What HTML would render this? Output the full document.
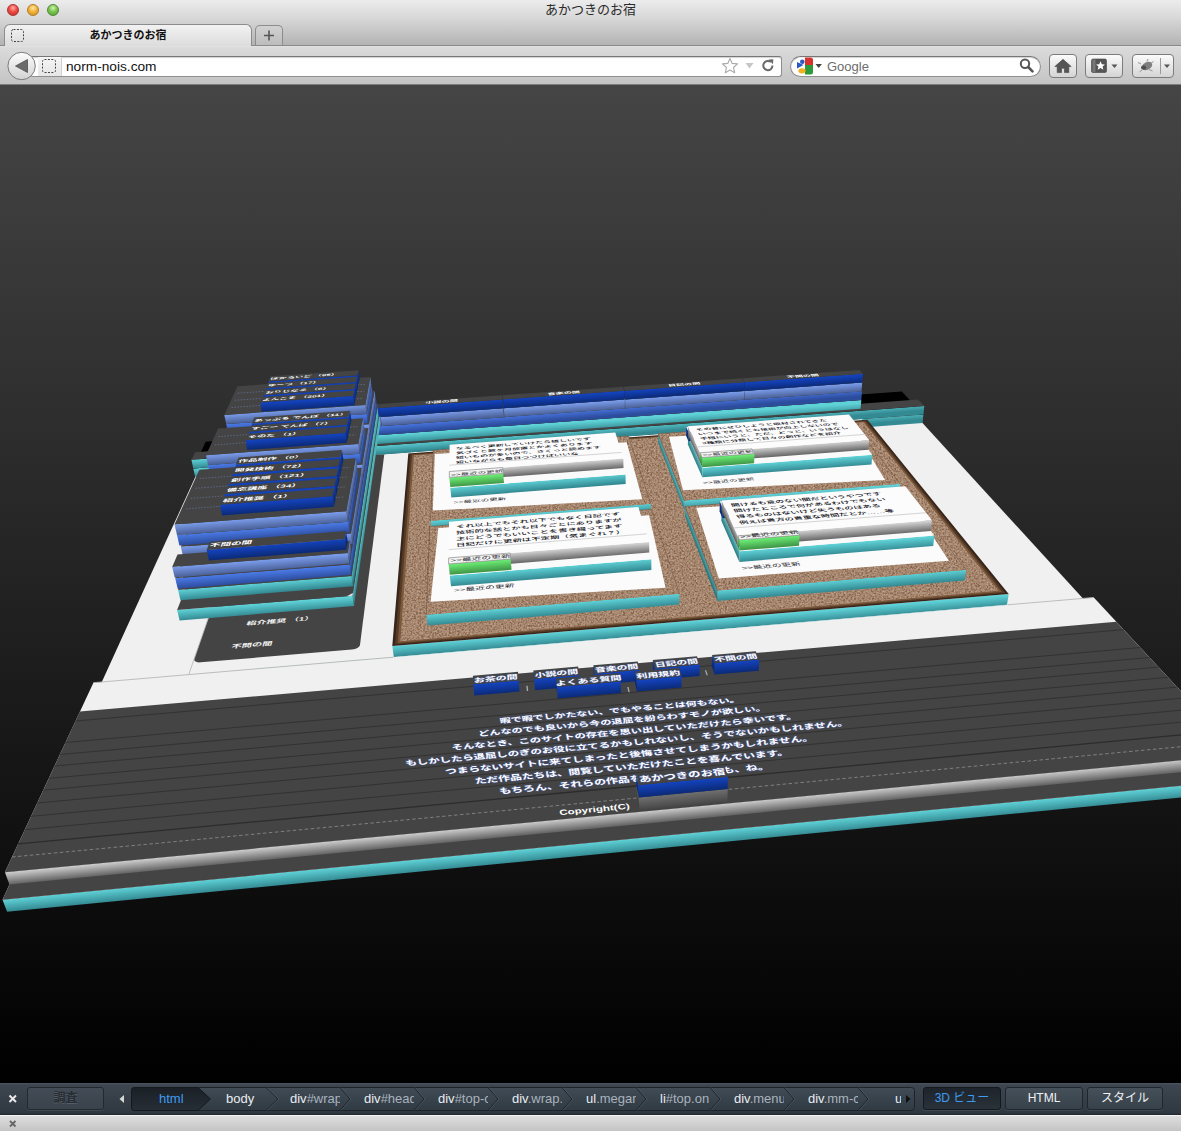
<!DOCTYPE html>
<html lang="ja">
<head>
<meta charset="utf-8">
<title>あかつきのお宿</title>
<style>
html,body{margin:0;padding:0;}
body{width:1181px;height:1131px;overflow:hidden;position:relative;background:#000;font-family:"Liberation Sans","Noto Sans CJK JP",sans-serif;}
#chrome{position:absolute;left:0;top:0;width:1181px;height:85px;background:linear-gradient(#ececec 0px,#d8d8d8 18px,#b3b3b3 45px,#b3b3b3 100%);}
#titlebar{position:absolute;left:0;top:0;width:1181px;height:22px;text-align:center;font-size:13px;line-height:20px;color:#2a2a2a;}
.tl{position:absolute;top:4px;width:12px;height:12px;border-radius:50%;box-sizing:border-box;}
#tabbar{position:absolute;left:0;top:22px;width:1181px;height:23px;border-bottom:1px solid #8a8a8a;}
#tab{position:absolute;left:4px;top:24px;width:248px;height:22px;background:linear-gradient(#f2f2f2,#dcdcdc);border:1px solid #8c8c8c;border-bottom:none;border-radius:6px 6px 0 0;box-sizing:border-box;font-size:11px;font-weight:bold;text-align:center;line-height:20px;color:#111;}
#newtab{position:absolute;left:255px;top:25px;width:28px;height:20px;background:linear-gradient(#d2d2d2,#bcbcbc);border:1px solid #8c8c8c;border-bottom:none;border-radius:5px 5px 0 0;box-sizing:border-box;}
#navbar{position:absolute;left:0;top:46px;width:1181px;height:38px;background:linear-gradient(#e2e2e2 0,#dadada 2px,#c4c4c4 100%);border-bottom:1px solid #7d7d7d;}
.field{position:absolute;top:56px;height:21px;background:#fff;border:1px solid #8f8f8f;border-top-color:#777;box-sizing:border-box;box-shadow:inset 0 1px 1px rgba(0,0,0,.18);}
.tbtn{position:absolute;top:54px;height:24px;border:1px solid #7c7c7c;border-radius:4px;box-sizing:border-box;background:linear-gradient(#fbfbfb,#d4d4d4);}
#view{position:absolute;left:0;top:85px;width:1181px;height:998px;background:linear-gradient(#454545 0%,#000 100%);overflow:hidden;}
#scene{position:absolute;left:0;top:-85px;}
#dev{position:absolute;left:0;top:1083px;width:1181px;height:32px;background:linear-gradient(#4c5560 0px,#3d4650 2px,#2f3841 30px,#1d232a 32px);color:#e4e8ec;font-size:12px;}
#status{position:absolute;left:0;top:1115px;width:1181px;height:16px;background:linear-gradient(#dedede,#c4c4c4);border-top:1px solid #f4f4f4;box-sizing:border-box;}
.crumb{position:absolute;top:0;height:32px;line-height:31px;font-size:13px;color:#e9edf0;white-space:nowrap;}
.crumb i{font-style:normal;color:#a9b3bd;}
.dbtn{position:absolute;top:4px;height:23px;box-sizing:border-box;border:1px solid #20262d;border-radius:3px;background:linear-gradient(#46505a,#37414a);text-align:center;line-height:21px;font-size:12px;color:#eef1f4;box-shadow:0 1px 0 rgba(255,255,255,.08);}
</style>
</head>
<body>
<div id="chrome">
 <div id="titlebar">あかつきのお宿</div>
 <div class="tl" style="left:7px;background:radial-gradient(circle at 50% 30%,#ffb0a8 0%,#ee4b43 45%,#c2281f 100%);border:1px solid #a8352e;"></div>
 <div class="tl" style="left:27px;background:radial-gradient(circle at 50% 30%,#ffe6a8 0%,#f2b43a 45%,#d08a14 100%);border:1px solid #b07a24;"></div>
 <div class="tl" style="left:47px;background:radial-gradient(circle at 50% 30%,#d4f2b0 0%,#7cc552 45%,#4e9a2c 100%);border:1px solid #4f8a38;"></div>
 <div id="tabbar"></div>
 <div id="navbar"></div>
 <div id="tab">あかつきのお宿</div>
 <svg style="position:absolute;left:10px;top:28px" width="16" height="16"><rect x="1.5" y="1.5" width="12" height="12" rx="2" fill="none" stroke="#444" stroke-width="1" stroke-dasharray="2 1.4"/></svg>
 <div id="newtab"><svg width="26" height="19" style="position:absolute;left:0;top:0"><path d="M13 4.5v10M8 9.5h10" stroke="#555" stroke-width="1.6" fill="none"/></svg></div>
 <div class="field" style="left:30px;width:752px;border-radius:3px;"></div>
 <div style="position:absolute;left:38px;top:57px;width:23px;height:19px;background:linear-gradient(#f6f6f6,#e6e6e6);border-right:1px solid #d0d0d0;"></div>
 <svg style="position:absolute;left:6px;top:50px" width="32" height="32"><circle cx="15.6" cy="16" r="13.7" fill="url(#bg1)" stroke="#7a7a7a" stroke-width="1"/><defs><linearGradient id="bg1" x1="0" y1="0" x2="0" y2="1"><stop offset="0" stop-color="#fdfdfd"/><stop offset="1" stop-color="#d2d2d2"/></linearGradient></defs><path d="M21.5 9.5v13L9.5 16z" fill="#6a6a6a" stroke="#505050" stroke-width=".8" stroke-linejoin="round"/></svg>
 <svg style="position:absolute;left:41px;top:58px" width="16" height="16"><rect x="1.5" y="1.5" width="13" height="13" rx="2" fill="none" stroke="#444" stroke-width="1" stroke-dasharray="2 1.4"/></svg>
 <div style="position:absolute;left:66px;top:57px;font-size:13.7px;line-height:19px;color:#111;">norm-nois.com</div>
 <svg style="position:absolute;left:720px;top:56px" width="60" height="20"><path d="M10 2.5l2.2 4.9 5.3.5-4 3.6 1.2 5.2L10 14l-4.7 2.7 1.2-5.2-4-3.6 5.3-.5z" fill="#fff" stroke="#aaa" stroke-width="1.1" stroke-linejoin="round"/><path d="M25.5 7h8l-4 5.5z" fill="#c6c6c6"/><path d="M52.5 9.5a4.6 4.6 0 1 1-1.6-3.4" fill="none" stroke="#6a6a6a" stroke-width="2"/><path d="M48.5 3.5l4.8-.3-.3 5z" fill="#6a6a6a"/></svg>
 <div class="field" style="left:790px;width:251px;border-radius:11px;"></div>
 <svg style="position:absolute;left:796px;top:57px" width="30" height="18"><rect x="1" y="0.5" width="16" height="17" rx="2.5" fill="#fff"/><path d="M9 .5h5.5a2.5 2.5 0 0 1 2.500 2.500V8H9z" fill="#d6312b"/><path d="M9 8h8v7a2.500 2.500 0 0 1-2.500 2.500H9z" fill="#2a9a3c"/><path d="M1 5l6.500 3L1 11.500z" fill="#2b59c3"/><circle cx="6.300" cy="4.800" r="2.300" fill="#2b59c3"/><ellipse cx="6" cy="13.800" rx="3.600" ry="2.600" fill="#f2b01e"/><path d="M19.500 7h6.400l-3.200 4z" fill="#444"/></svg>
 <div style="position:absolute;left:827px;top:57px;font-size:13px;line-height:19px;color:#6d6d6d;">Google</div>
 <svg style="position:absolute;left:1017px;top:56px" width="20" height="20"><circle cx="8" cy="7.800" r="4.200" fill="none" stroke="#555" stroke-width="2"/><path d="M11.200 11l4.300 4.300" stroke="#555" stroke-width="2.600" stroke-linecap="round"/></svg>
 <div class="tbtn" style="left:1049px;width:28px;"><svg width="26" height="22" style="position:absolute;left:0;top:0"><path d="M13 4.300L4.800 11.600h2.400v6h4.300v-4.300h3v4.300h4.300v-6h2.400z" fill="#555" stroke="#444" stroke-width=".6" stroke-linejoin="round"/></svg></div>
 <div class="tbtn" style="left:1085px;width:38px;"><svg width="36" height="22" style="position:absolute;left:0;top:0"><rect x="5.500" y="4" width="15" height="13.500" rx="1.500" fill="#555" stroke="#444" stroke-width=".6"/><rect x="6.500" y="4.500" width="3" height="12.500" fill="#777"/><path d="M14.500 6.300l1.300 2.900 3.100.3-2.300 2.100.7 3.100-2.800-1.600-2.800 1.600.7-3.100-2.300-2.100 3.100-.3z" fill="#fff"/><path d="M25.500 9.500h6l-3 3.600z" fill="#555"/></svg></div>
 <div class="tbtn" style="left:1132px;width:42px;"><svg width="40" height="22" style="position:absolute;left:0;top:0"><ellipse cx="14" cy="11" rx="5.500" ry="3.800" transform="rotate(-28 14 11)" fill="#7d7d7d"/><ellipse cx="10.600" cy="12.600" rx="2.600" ry="2.200" fill="#4d4d4d"/><path d="M8 9l-3-1.500M9 15l-2.500 2M16 14.500l3.500 1.500M17.500 8.500l3-2M14 6.500l1-2.500" stroke="#8a8a8a" stroke-width=".9" fill="none"/><path d="M27.500 3v16" stroke="#999" stroke-width="1"/><path d="M31 9.500h6l-3 3.600z" fill="#555"/></svg></div>
</div>
<div id="view">
<svg id="scene" width="1181" height="1083" viewBox="0 0 1181 1083" font-family="Liberation Sans,Noto Sans CJK JP,sans-serif"><defs><filter id="corkf" x="0" y="0" width="100%" height="100%"><feTurbulence type="fractalNoise" baseFrequency="0.55" numOctaves="2" seed="7" result="n"/><feColorMatrix in="n" type="matrix" values="0 0 0 0 0.62  0 0 0 0 0.48  0 0 0 0 0.38  1.6 1.6 0 0 -1.15" result="c"/><feComposite in="c" in2="SourceGraphic" operator="in" result="cc"/><feMerge><feMergeNode in="SourceGraphic"/><feMergeNode in="cc"/></feMerge></filter><filter id="corkg" x="0" y="0" width="100%" height="100%"><feTurbulence type="fractalNoise" baseFrequency="0.7" numOctaves="2" seed="3" result="n"/><feColorMatrix in="n" type="matrix" values="0 0 0 0 0.85  0 0 0 0 0.74  0 0 0 0 0.64  0 2.2 0 0 -1.15" result="c"/><feComposite in="c" in2="SourceGraphic" operator="in"/></filter><linearGradient id="g1" gradientUnits="userSpaceOnUse" x1="2.5" y1="899.7" x2="3.7" y2="912.1"><stop offset="0" stop-color="#5fd2d7"/><stop offset="1" stop-color="#348a93"/></linearGradient><linearGradient id="g2" gradientUnits="userSpaceOnUse" x1="193.3" y1="468.4" x2="194.0" y2="477.2"><stop offset="0" stop-color="#5fd2d7"/><stop offset="1" stop-color="#348a93"/></linearGradient><linearGradient id="g3" gradientUnits="userSpaceOnUse" x1="188.8" y1="674.4" x2="189.8" y2="685.4"><stop offset="0" stop-color="#5fd2d7"/><stop offset="1" stop-color="#348a93"/></linearGradient><linearGradient id="g4" gradientUnits="userSpaceOnUse" x1="191.4" y1="459.7" x2="192.1" y2="468.5"><stop offset="0" stop-color="#5fd2d7"/><stop offset="1" stop-color="#348a93"/></linearGradient><linearGradient id="g5" gradientUnits="userSpaceOnUse" x1="259.5" y1="443.7" x2="260.1" y2="452.6"><stop offset="0" stop-color="#5fd2d7"/><stop offset="1" stop-color="#348a93"/></linearGradient><linearGradient id="g6" gradientUnits="userSpaceOnUse" x1="257.8" y1="434.9" x2="258.5" y2="443.8"><stop offset="0" stop-color="#4b7ae6"/><stop offset="1" stop-color="#2c4c9c"/></linearGradient><linearGradient id="g7" gradientUnits="userSpaceOnUse" x1="744.7" y1="391.0" x2="745.3" y2="399.7"><stop offset="0" stop-color="#7a9ceb"/><stop offset="1" stop-color="#4a6096"/></linearGradient><linearGradient id="g8" gradientUnits="userSpaceOnUse" x1="742.3" y1="387.0" x2="738.2" y2="389.5"><stop offset="0" stop-color="#6886ca"/><stop offset="1" stop-color="#3f5281"/></linearGradient><linearGradient id="g9" gradientUnits="userSpaceOnUse" x1="625.1" y1="399.6" x2="625.7" y2="408.4"><stop offset="0" stop-color="#7a9ceb"/><stop offset="1" stop-color="#4a6096"/></linearGradient><linearGradient id="g10" gradientUnits="userSpaceOnUse" x1="623.6" y1="395.5" x2="621.1" y2="396.4"><stop offset="0" stop-color="#6886ca"/><stop offset="1" stop-color="#3f5281"/></linearGradient><linearGradient id="g11" gradientUnits="userSpaceOnUse" x1="256.2" y1="426.0" x2="256.8" y2="435.0"><stop offset="0" stop-color="#7a9ceb"/><stop offset="1" stop-color="#4a6096"/></linearGradient><linearGradient id="g12" gradientUnits="userSpaceOnUse" x1="380.3" y1="417.1" x2="382.7" y2="417.5"><stop offset="0" stop-color="#6886ca"/><stop offset="1" stop-color="#3f5281"/></linearGradient><linearGradient id="g13" gradientUnits="userSpaceOnUse" x1="503.8" y1="408.3" x2="504.4" y2="417.1"><stop offset="0" stop-color="#7a9ceb"/><stop offset="1" stop-color="#4a6096"/></linearGradient><linearGradient id="g14" gradientUnits="userSpaceOnUse" x1="503.4" y1="404.1" x2="503.2" y2="404.1"><stop offset="0" stop-color="#6886ca"/><stop offset="1" stop-color="#3f5281"/></linearGradient><linearGradient id="g15" gradientUnits="userSpaceOnUse" x1="380.8" y1="417.1" x2="381.5" y2="426.0"><stop offset="0" stop-color="#7a9ceb"/><stop offset="1" stop-color="#4a6096"/></linearGradient><linearGradient id="g16" gradientUnits="userSpaceOnUse" x1="744.9" y1="382.2" x2="745.5" y2="391.0"><stop offset="0" stop-color="#1444c0"/><stop offset="1" stop-color="#0b2a78"/></linearGradient><linearGradient id="g17" gradientUnits="userSpaceOnUse" x1="742.5" y1="378.2" x2="738.4" y2="380.8"><stop offset="0" stop-color="#113aa5"/><stop offset="1" stop-color="#092467"/></linearGradient><linearGradient id="g18" gradientUnits="userSpaceOnUse" x1="624.8" y1="390.7" x2="625.5" y2="399.6"><stop offset="0" stop-color="#1444c0"/><stop offset="1" stop-color="#0b2a78"/></linearGradient><linearGradient id="g19" gradientUnits="userSpaceOnUse" x1="623.4" y1="386.7" x2="620.8" y2="387.6"><stop offset="0" stop-color="#113aa5"/><stop offset="1" stop-color="#092467"/></linearGradient><linearGradient id="g20" gradientUnits="userSpaceOnUse" x1="254.5" y1="417.0" x2="255.1" y2="426.1"><stop offset="0" stop-color="#1444c0"/><stop offset="1" stop-color="#0b2a78"/></linearGradient><linearGradient id="g21" gradientUnits="userSpaceOnUse" x1="379.1" y1="408.2" x2="381.6" y2="408.5"><stop offset="0" stop-color="#113aa5"/><stop offset="1" stop-color="#092467"/></linearGradient><linearGradient id="g22" gradientUnits="userSpaceOnUse" x1="503.1" y1="399.3" x2="503.7" y2="408.3"><stop offset="0" stop-color="#1444c0"/><stop offset="1" stop-color="#0b2a78"/></linearGradient><linearGradient id="g23" gradientUnits="userSpaceOnUse" x1="502.7" y1="395.2" x2="502.5" y2="395.3"><stop offset="0" stop-color="#113aa5"/><stop offset="1" stop-color="#092467"/></linearGradient><linearGradient id="g24" gradientUnits="userSpaceOnUse" x1="379.7" y1="408.1" x2="380.3" y2="417.1"><stop offset="0" stop-color="#1444c0"/><stop offset="1" stop-color="#0b2a78"/></linearGradient><linearGradient id="g25" gradientUnits="userSpaceOnUse" x1="392.3" y1="646.1" x2="393.2" y2="657.0"><stop offset="0" stop-color="#5fd2d7"/><stop offset="1" stop-color="#348a93"/></linearGradient><linearGradient id="g26" gradientUnits="userSpaceOnUse" x1="684.3" y1="500.4" x2="685.0" y2="510.1"><stop offset="0" stop-color="#5fd2d7"/><stop offset="1" stop-color="#348a93"/></linearGradient><linearGradient id="g27" gradientUnits="userSpaceOnUse" x1="658.2" y1="433.8" x2="655.3" y2="434.9"><stop offset="0" stop-color="#51b4b8"/><stop offset="1" stop-color="#2c767e"/></linearGradient><linearGradient id="g28" gradientUnits="userSpaceOnUse" x1="430.6" y1="520.8" x2="431.4" y2="530.6"><stop offset="0" stop-color="#5fd2d7"/><stop offset="1" stop-color="#348a93"/></linearGradient><linearGradient id="g29" gradientUnits="userSpaceOnUse" x1="717.5" y1="590.4" x2="718.4" y2="601.0"><stop offset="0" stop-color="#5fd2d7"/><stop offset="1" stop-color="#348a93"/></linearGradient><linearGradient id="g30" gradientUnits="userSpaceOnUse" x1="685.0" y1="506.6" x2="681.7" y2="507.9"><stop offset="0" stop-color="#51b4b8"/><stop offset="1" stop-color="#2c767e"/></linearGradient><linearGradient id="g31" gradientUnits="userSpaceOnUse" x1="426.3" y1="614.8" x2="427.2" y2="625.7"><stop offset="0" stop-color="#5fd2d7"/><stop offset="1" stop-color="#348a93"/></linearGradient><linearGradient id="g32" gradientUnits="userSpaceOnUse" x1="702.4" y1="467.7" x2="703.1" y2="477.2"><stop offset="0" stop-color="#5fd2d7"/><stop offset="1" stop-color="#348a93"/></linearGradient><linearGradient id="g33" gradientUnits="userSpaceOnUse" x1="688.0" y1="435.5" x2="684.5" y2="437.0"><stop offset="0" stop-color="#51b4b8"/><stop offset="1" stop-color="#2c767e"/></linearGradient><linearGradient id="g34" gradientUnits="userSpaceOnUse" x1="450.3" y1="487.7" x2="451.1" y2="497.4"><stop offset="0" stop-color="#5fd2d7"/><stop offset="1" stop-color="#348a93"/></linearGradient><linearGradient id="g35" gradientUnits="userSpaceOnUse" x1="739.7" y1="551.3" x2="740.5" y2="561.8"><stop offset="0" stop-color="#5fd2d7"/><stop offset="1" stop-color="#348a93"/></linearGradient><linearGradient id="g36" gradientUnits="userSpaceOnUse" x1="721.5" y1="510.7" x2="717.6" y2="512.4"><stop offset="0" stop-color="#51b4b8"/><stop offset="1" stop-color="#2c767e"/></linearGradient><linearGradient id="g37" gradientUnits="userSpaceOnUse" x1="449.8" y1="575.5" x2="450.7" y2="586.2"><stop offset="0" stop-color="#5fd2d7"/><stop offset="1" stop-color="#348a93"/></linearGradient><linearGradient id="g38" gradientUnits="userSpaceOnUse" x1="688.5" y1="431.9" x2="689.2" y2="441.2"><stop offset="0" stop-color="#1444c0"/><stop offset="1" stop-color="#0b2a78"/></linearGradient><linearGradient id="g39" gradientUnits="userSpaceOnUse" x1="686.3" y1="426.9" x2="682.8" y2="428.5"><stop offset="0" stop-color="#113aa5"/><stop offset="1" stop-color="#092467"/></linearGradient><linearGradient id="g40" gradientUnits="userSpaceOnUse" x1="722.7" y1="507.9" x2="723.5" y2="518.1"><stop offset="0" stop-color="#1444c0"/><stop offset="1" stop-color="#0b2a78"/></linearGradient><linearGradient id="g41" gradientUnits="userSpaceOnUse" x1="719.8" y1="501.3" x2="715.8" y2="503.1"><stop offset="0" stop-color="#113aa5"/><stop offset="1" stop-color="#092467"/></linearGradient><linearGradient id="g42" gradientUnits="userSpaceOnUse" x1="449.4" y1="471.5" x2="450.1" y2="481.1"><stop offset="0" stop-color="#cfcfcf"/><stop offset="1" stop-color="#636363"/></linearGradient><linearGradient id="g43" gradientUnits="userSpaceOnUse" x1="700.1" y1="452.8" x2="700.8" y2="462.3"><stop offset="0" stop-color="#cfcfcf"/><stop offset="1" stop-color="#636363"/></linearGradient><linearGradient id="g44" gradientUnits="userSpaceOnUse" x1="688.0" y1="426.3" x2="684.5" y2="427.8"><stop offset="0" stop-color="#b2b2b2"/><stop offset="1" stop-color="#555555"/></linearGradient><linearGradient id="g45" gradientUnits="userSpaceOnUse" x1="702.2" y1="457.5" x2="702.9" y2="467.1"><stop offset="0" stop-color="#6ef277"/><stop offset="1" stop-color="#3f9446"/></linearGradient><linearGradient id="g46" gradientUnits="userSpaceOnUse" x1="700.1" y1="452.8" x2="696.4" y2="454.5"><stop offset="0" stop-color="#5ed066"/><stop offset="1" stop-color="#367f3c"/></linearGradient><linearGradient id="g47" gradientUnits="userSpaceOnUse" x1="449.3" y1="477.4" x2="450.0" y2="487.2"><stop offset="0" stop-color="#6ef277"/><stop offset="1" stop-color="#3f9446"/></linearGradient><linearGradient id="g48" gradientUnits="userSpaceOnUse" x1="448.7" y1="557.9" x2="449.5" y2="568.6"><stop offset="0" stop-color="#cfcfcf"/><stop offset="1" stop-color="#636363"/></linearGradient><linearGradient id="g49" gradientUnits="userSpaceOnUse" x1="737.8" y1="535.9" x2="738.6" y2="546.4"><stop offset="0" stop-color="#cfcfcf"/><stop offset="1" stop-color="#636363"/></linearGradient><linearGradient id="g50" gradientUnits="userSpaceOnUse" x1="721.7" y1="500.5" x2="717.7" y2="502.3"><stop offset="0" stop-color="#b2b2b2"/><stop offset="1" stop-color="#555555"/></linearGradient><linearGradient id="g51" gradientUnits="userSpaceOnUse" x1="739.6" y1="539.9" x2="740.5" y2="550.5"><stop offset="0" stop-color="#6ef277"/><stop offset="1" stop-color="#3f9446"/></linearGradient><linearGradient id="g52" gradientUnits="userSpaceOnUse" x1="737.8" y1="535.9" x2="733.5" y2="537.8"><stop offset="0" stop-color="#5ed066"/><stop offset="1" stop-color="#367f3c"/></linearGradient><linearGradient id="g53" gradientUnits="userSpaceOnUse" x1="448.6" y1="564.0" x2="449.5" y2="574.8"><stop offset="0" stop-color="#6ef277"/><stop offset="1" stop-color="#3f9446"/></linearGradient><linearGradient id="g54" gradientUnits="userSpaceOnUse" x1="177.1" y1="610.0" x2="177.9" y2="620.6"><stop offset="0" stop-color="#5fd2d7"/><stop offset="1" stop-color="#348a93"/></linearGradient><linearGradient id="g55" gradientUnits="userSpaceOnUse" x1="352.5" y1="595.7" x2="355.6" y2="596.2"><stop offset="0" stop-color="#51b4b8"/><stop offset="1" stop-color="#2c767e"/></linearGradient><linearGradient id="g56" gradientUnits="userSpaceOnUse" x1="178.0" y1="589.9" x2="178.9" y2="600.4"><stop offset="0" stop-color="#5fd2d7"/><stop offset="1" stop-color="#348a93"/></linearGradient><linearGradient id="g57" gradientUnits="userSpaceOnUse" x1="351.5" y1="575.9" x2="354.6" y2="576.4"><stop offset="0" stop-color="#51b4b8"/><stop offset="1" stop-color="#2c767e"/></linearGradient><linearGradient id="g58" gradientUnits="userSpaceOnUse" x1="175.2" y1="578.3" x2="176.0" y2="588.9"><stop offset="0" stop-color="#4b7ae6"/><stop offset="1" stop-color="#2c4c9c"/></linearGradient><linearGradient id="g59" gradientUnits="userSpaceOnUse" x1="349.6" y1="564.4" x2="352.8" y2="564.9"><stop offset="0" stop-color="#4068c5"/><stop offset="1" stop-color="#254186"/></linearGradient><linearGradient id="g60" gradientUnits="userSpaceOnUse" x1="229.0" y1="434.4" x2="229.6" y2="443.5"><stop offset="0" stop-color="#7a9ceb"/><stop offset="1" stop-color="#4a6096"/></linearGradient><linearGradient id="g61" gradientUnits="userSpaceOnUse" x1="368.9" y1="424.3" x2="371.6" y2="424.8"><stop offset="0" stop-color="#6886ca"/><stop offset="1" stop-color="#3f5281"/></linearGradient><linearGradient id="g62" gradientUnits="userSpaceOnUse" x1="211.2" y1="475.8" x2="211.9" y2="485.5"><stop offset="0" stop-color="#7a9ceb"/><stop offset="1" stop-color="#4a6096"/></linearGradient><linearGradient id="g63" gradientUnits="userSpaceOnUse" x1="362.3" y1="464.6" x2="365.1" y2="465.1"><stop offset="0" stop-color="#6886ca"/><stop offset="1" stop-color="#3f5281"/></linearGradient><linearGradient id="g64" gradientUnits="userSpaceOnUse" x1="180.8" y1="546.7" x2="181.6" y2="557.2"><stop offset="0" stop-color="#7a9ceb"/><stop offset="1" stop-color="#4a6096"/></linearGradient><linearGradient id="g65" gradientUnits="userSpaceOnUse" x1="350.9" y1="533.5" x2="354.1" y2="534.0"><stop offset="0" stop-color="#6886ca"/><stop offset="1" stop-color="#3f5281"/></linearGradient><linearGradient id="g66" gradientUnits="userSpaceOnUse" x1="172.2" y1="566.9" x2="173.0" y2="577.7"><stop offset="0" stop-color="#7a9ceb"/><stop offset="1" stop-color="#4a6096"/></linearGradient><linearGradient id="g67" gradientUnits="userSpaceOnUse" x1="347.7" y1="553.1" x2="351.0" y2="553.6"><stop offset="0" stop-color="#6886ca"/><stop offset="1" stop-color="#3f5281"/></linearGradient><linearGradient id="g68" gradientUnits="userSpaceOnUse" x1="226.2" y1="424.0" x2="226.8" y2="433.1"><stop offset="0" stop-color="#4b7ae6"/><stop offset="1" stop-color="#2c4c9c"/></linearGradient><linearGradient id="g69" gradientUnits="userSpaceOnUse" x1="366.6" y1="414.0" x2="369.3" y2="414.5"><stop offset="0" stop-color="#4068c5"/><stop offset="1" stop-color="#254186"/></linearGradient><linearGradient id="g70" gradientUnits="userSpaceOnUse" x1="208.0" y1="464.9" x2="208.7" y2="474.6"><stop offset="0" stop-color="#4b7ae6"/><stop offset="1" stop-color="#2c4c9c"/></linearGradient><linearGradient id="g71" gradientUnits="userSpaceOnUse" x1="359.7" y1="453.8" x2="362.7" y2="454.3"><stop offset="0" stop-color="#4068c5"/><stop offset="1" stop-color="#254186"/></linearGradient><linearGradient id="g72" gradientUnits="userSpaceOnUse" x1="177.0" y1="535.0" x2="177.8" y2="545.6"><stop offset="0" stop-color="#4b7ae6"/><stop offset="1" stop-color="#2c4c9c"/></linearGradient><linearGradient id="g73" gradientUnits="userSpaceOnUse" x1="348.0" y1="521.8" x2="351.3" y2="522.3"><stop offset="0" stop-color="#4068c5"/><stop offset="1" stop-color="#254186"/></linearGradient><linearGradient id="g74" gradientUnits="userSpaceOnUse" x1="206.6" y1="549.9" x2="207.5" y2="560.6"><stop offset="0" stop-color="#1444c0"/><stop offset="1" stop-color="#0b2a78"/></linearGradient><linearGradient id="g75" gradientUnits="userSpaceOnUse" x1="344.7" y1="539.0" x2="348.1" y2="539.6"><stop offset="0" stop-color="#113aa5"/><stop offset="1" stop-color="#092467"/></linearGradient><linearGradient id="g76" gradientUnits="userSpaceOnUse" x1="224.3" y1="414.9" x2="225.0" y2="424.1"><stop offset="0" stop-color="#7a9ceb"/><stop offset="1" stop-color="#4a6096"/></linearGradient><linearGradient id="g77" gradientUnits="userSpaceOnUse" x1="365.3" y1="404.9" x2="368.1" y2="405.4"><stop offset="0" stop-color="#6886ca"/><stop offset="1" stop-color="#3f5281"/></linearGradient><linearGradient id="g78" gradientUnits="userSpaceOnUse" x1="206.0" y1="455.3" x2="206.7" y2="465.0"><stop offset="0" stop-color="#7a9ceb"/><stop offset="1" stop-color="#4a6096"/></linearGradient><linearGradient id="g79" gradientUnits="userSpaceOnUse" x1="358.3" y1="444.1" x2="361.4" y2="444.7"><stop offset="0" stop-color="#6886ca"/><stop offset="1" stop-color="#3f5281"/></linearGradient><linearGradient id="g80" gradientUnits="userSpaceOnUse" x1="174.5" y1="524.4" x2="175.3" y2="535.1"><stop offset="0" stop-color="#7a9ceb"/><stop offset="1" stop-color="#4a6096"/></linearGradient><linearGradient id="g81" gradientUnits="userSpaceOnUse" x1="346.3" y1="511.2" x2="349.7" y2="511.8"><stop offset="0" stop-color="#6886ca"/><stop offset="1" stop-color="#3f5281"/></linearGradient><linearGradient id="g82" gradientUnits="userSpaceOnUse" x1="268.4" y1="381.4" x2="269.1" y2="390.3"><stop offset="0" stop-color="#1444c0"/><stop offset="1" stop-color="#0b2a78"/></linearGradient><linearGradient id="g83" gradientUnits="userSpaceOnUse" x1="357.4" y1="375.2" x2="360.3" y2="375.8"><stop offset="0" stop-color="#113aa5"/><stop offset="1" stop-color="#092467"/></linearGradient><linearGradient id="g84" gradientUnits="userSpaceOnUse" x1="265.7" y1="388.2" x2="266.4" y2="397.3"><stop offset="0" stop-color="#1444c0"/><stop offset="1" stop-color="#0b2a78"/></linearGradient><linearGradient id="g85" gradientUnits="userSpaceOnUse" x1="356.0" y1="382.0" x2="359.0" y2="382.6"><stop offset="0" stop-color="#113aa5"/><stop offset="1" stop-color="#092467"/></linearGradient><linearGradient id="g86" gradientUnits="userSpaceOnUse" x1="263.0" y1="395.3" x2="263.6" y2="404.5"><stop offset="0" stop-color="#1444c0"/><stop offset="1" stop-color="#0b2a78"/></linearGradient><linearGradient id="g87" gradientUnits="userSpaceOnUse" x1="354.5" y1="388.9" x2="357.6" y2="389.5"><stop offset="0" stop-color="#113aa5"/><stop offset="1" stop-color="#092467"/></linearGradient><linearGradient id="g88" gradientUnits="userSpaceOnUse" x1="260.1" y1="402.6" x2="260.7" y2="411.9"><stop offset="0" stop-color="#1444c0"/><stop offset="1" stop-color="#0b2a78"/></linearGradient><linearGradient id="g89" gradientUnits="userSpaceOnUse" x1="353.1" y1="396.1" x2="356.1" y2="396.7"><stop offset="0" stop-color="#113aa5"/><stop offset="1" stop-color="#092467"/></linearGradient><linearGradient id="g90" gradientUnits="userSpaceOnUse" x1="251.8" y1="423.6" x2="252.5" y2="433.2"><stop offset="0" stop-color="#1444c0"/><stop offset="1" stop-color="#0b2a78"/></linearGradient><linearGradient id="g91" gradientUnits="userSpaceOnUse" x1="348.8" y1="416.7" x2="352.0" y2="417.4"><stop offset="0" stop-color="#113aa5"/><stop offset="1" stop-color="#092467"/></linearGradient><linearGradient id="g92" gradientUnits="userSpaceOnUse" x1="248.6" y1="431.8" x2="249.3" y2="441.5"><stop offset="0" stop-color="#1444c0"/><stop offset="1" stop-color="#0b2a78"/></linearGradient><linearGradient id="g93" gradientUnits="userSpaceOnUse" x1="347.1" y1="424.7" x2="350.4" y2="425.4"><stop offset="0" stop-color="#113aa5"/><stop offset="1" stop-color="#092467"/></linearGradient><linearGradient id="g94" gradientUnits="userSpaceOnUse" x1="245.3" y1="440.2" x2="246.0" y2="450.0"><stop offset="0" stop-color="#1444c0"/><stop offset="1" stop-color="#0b2a78"/></linearGradient><linearGradient id="g95" gradientUnits="userSpaceOnUse" x1="345.4" y1="433.0" x2="348.7" y2="433.7"><stop offset="0" stop-color="#113aa5"/><stop offset="1" stop-color="#092467"/></linearGradient><linearGradient id="g96" gradientUnits="userSpaceOnUse" x1="235.7" y1="464.6" x2="236.5" y2="474.7"><stop offset="0" stop-color="#1444c0"/><stop offset="1" stop-color="#0b2a78"/></linearGradient><linearGradient id="g97" gradientUnits="userSpaceOnUse" x1="340.5" y1="456.9" x2="343.9" y2="457.6"><stop offset="0" stop-color="#113aa5"/><stop offset="1" stop-color="#092467"/></linearGradient><linearGradient id="g98" gradientUnits="userSpaceOnUse" x1="232.0" y1="474.1" x2="232.7" y2="484.4"><stop offset="0" stop-color="#1444c0"/><stop offset="1" stop-color="#0b2a78"/></linearGradient><linearGradient id="g99" gradientUnits="userSpaceOnUse" x1="338.5" y1="466.2" x2="342.0" y2="466.9"><stop offset="0" stop-color="#113aa5"/><stop offset="1" stop-color="#092467"/></linearGradient><linearGradient id="g100" gradientUnits="userSpaceOnUse" x1="228.1" y1="484.0" x2="228.9" y2="494.4"><stop offset="0" stop-color="#1444c0"/><stop offset="1" stop-color="#0b2a78"/></linearGradient><linearGradient id="g101" gradientUnits="userSpaceOnUse" x1="336.5" y1="475.9" x2="340.1" y2="476.6"><stop offset="0" stop-color="#113aa5"/><stop offset="1" stop-color="#092467"/></linearGradient><linearGradient id="g102" gradientUnits="userSpaceOnUse" x1="224.1" y1="494.2" x2="224.8" y2="504.8"><stop offset="0" stop-color="#1444c0"/><stop offset="1" stop-color="#0b2a78"/></linearGradient><linearGradient id="g103" gradientUnits="userSpaceOnUse" x1="334.4" y1="485.9" x2="338.1" y2="486.7"><stop offset="0" stop-color="#113aa5"/><stop offset="1" stop-color="#092467"/></linearGradient><linearGradient id="g104" gradientUnits="userSpaceOnUse" x1="219.9" y1="504.8" x2="220.7" y2="515.5"><stop offset="0" stop-color="#1444c0"/><stop offset="1" stop-color="#0b2a78"/></linearGradient><linearGradient id="g105" gradientUnits="userSpaceOnUse" x1="332.3" y1="496.3" x2="336.0" y2="497.0"><stop offset="0" stop-color="#113aa5"/><stop offset="1" stop-color="#092467"/></linearGradient><linearGradient id="g106" gradientUnits="userSpaceOnUse" x1="4.9" y1="872.3" x2="6.1" y2="884.8"><stop offset="0" stop-color="#cfcfcf"/><stop offset="1" stop-color="#636363"/></linearGradient><linearGradient id="g107" gradientUnits="userSpaceOnUse" x1="714.9" y1="663.3" x2="715.9" y2="674.4"><stop offset="0" stop-color="#1444c0"/><stop offset="1" stop-color="#0b2a78"/></linearGradient><linearGradient id="g108" gradientUnits="userSpaceOnUse" x1="712.0" y1="655.0" x2="708.4" y2="656.2"><stop offset="0" stop-color="#113aa5"/><stop offset="1" stop-color="#092467"/></linearGradient><linearGradient id="g109" gradientUnits="userSpaceOnUse" x1="655.1" y1="668.5" x2="656.0" y2="679.7"><stop offset="0" stop-color="#1444c0"/><stop offset="1" stop-color="#0b2a78"/></linearGradient><linearGradient id="g110" gradientUnits="userSpaceOnUse" x1="652.8" y1="660.1" x2="650.2" y2="660.8"><stop offset="0" stop-color="#113aa5"/><stop offset="1" stop-color="#092467"/></linearGradient><linearGradient id="g111" gradientUnits="userSpaceOnUse" x1="594.8" y1="673.7" x2="595.8" y2="685.0"><stop offset="0" stop-color="#1444c0"/><stop offset="1" stop-color="#0b2a78"/></linearGradient><linearGradient id="g112" gradientUnits="userSpaceOnUse" x1="593.3" y1="665.3" x2="591.8" y2="665.5"><stop offset="0" stop-color="#113aa5"/><stop offset="1" stop-color="#092467"/></linearGradient><linearGradient id="g113" gradientUnits="userSpaceOnUse" x1="534.2" y1="679.0" x2="535.2" y2="690.3"><stop offset="0" stop-color="#1444c0"/><stop offset="1" stop-color="#0b2a78"/></linearGradient><linearGradient id="g114" gradientUnits="userSpaceOnUse" x1="533.3" y1="670.5" x2="533.0" y2="670.5"><stop offset="0" stop-color="#113aa5"/><stop offset="1" stop-color="#092467"/></linearGradient><linearGradient id="g115" gradientUnits="userSpaceOnUse" x1="473.2" y1="684.3" x2="474.1" y2="695.6"><stop offset="0" stop-color="#1444c0"/><stop offset="1" stop-color="#0b2a78"/></linearGradient><linearGradient id="g116" gradientUnits="userSpaceOnUse" x1="636.7" y1="680.2" x2="637.7" y2="691.5"><stop offset="0" stop-color="#1444c0"/><stop offset="1" stop-color="#0b2a78"/></linearGradient><linearGradient id="g117" gradientUnits="userSpaceOnUse" x1="634.7" y1="671.5" x2="632.4" y2="672.1"><stop offset="0" stop-color="#113aa5"/><stop offset="1" stop-color="#092467"/></linearGradient><linearGradient id="g118" gradientUnits="userSpaceOnUse" x1="557.0" y1="687.1" x2="558.0" y2="698.5"><stop offset="0" stop-color="#1444c0"/><stop offset="1" stop-color="#0b2a78"/></linearGradient><linearGradient id="g119" gradientUnits="userSpaceOnUse" x1="555.9" y1="678.4" x2="555.1" y2="678.5"><stop offset="0" stop-color="#113aa5"/><stop offset="1" stop-color="#092467"/></linearGradient><linearGradient id="g120" gradientUnits="userSpaceOnUse" x1="638.9" y1="797.5" x2="640.1" y2="809.7"><stop offset="0" stop-color="#707070"/><stop offset="1" stop-color="#484848"/></linearGradient><linearGradient id="g121" gradientUnits="userSpaceOnUse" x1="636.4" y1="785.4" x2="634.2" y2="785.9"><stop offset="0" stop-color="#606060"/><stop offset="1" stop-color="#3d3d3d"/></linearGradient><linearGradient id="g122" gradientUnits="userSpaceOnUse" x1="638.6" y1="785.0" x2="639.8" y2="797.4"><stop offset="0" stop-color="#1444c0"/><stop offset="1" stop-color="#0b2a78"/></linearGradient><linearGradient id="g123" gradientUnits="userSpaceOnUse" x1="636.1" y1="773.1" x2="633.9" y2="773.5"><stop offset="0" stop-color="#113aa5"/><stop offset="1" stop-color="#092467"/></linearGradient></defs><polygon points="2.5,899.7 1248.1,779.2 1244.5,791.2 7.1,911.8" fill="url(#g1)"/>
<polygon points="206.8,451.8 902.4,401.1 1248.1,779.2 2.5,899.7" fill="#f0f0f0"/>
<polygon points="83.2,722.6 1114.0,632.6 1248.1,779.2 2.5,899.7" fill="#444444"/>
<polygon points="193.3,468.4 923.4,414.6 922.5,423.1 195.2,477.1" fill="url(#g2)"/>
<polygon points="205.7,441.8 901.8,391.5 923.4,414.6 193.3,468.4" fill="#000000"/>
<polygon points="188.8,674.4 1010.0,604.5 1008.3,615.1 191.5,685.2" fill="url(#g3)"/>
<polygon points="262.0,463.3 861.5,419.1 1010.0,604.5 188.8,674.4" fill="#f0f0f0"/>
<polygon points="262.0,463.3 384.3,454.3 360.0,644.8 359.6,645.9 358.7,646.9 357.4,647.9 355.7,648.7 353.8,649.2 351.8,649.6 200.7,662.3 198.7,662.4 196.9,662.1 195.5,661.6 194.6,660.8 194.2,659.9 194.3,658.8" fill="#444444"/>
<text transform="matrix(0.8262 -0.0683 -0.1016 0.4214 178.12 380.91)" x="157.0" y="605.5" font-size="12" fill="#f4f4f4" font-weight="bold">紹介推奨 （1）</text>
<text transform="matrix(0.8550 -0.0718 -0.1248 0.4504 187.44 363.23)" x="147.0" y="657.0" font-size="12" fill="#f4f4f4" font-weight="bold">不問の間</text>
<line x1="262.0" y1="463.3" x2="188.8" y2="674.4" stroke="#b4b4b4" stroke-width="0.8"/>
<polygon points="191.4,459.7 924.3,406.0 923.4,414.6 193.3,468.4" fill="url(#g4)"/>
<polygon points="195.0,452.2 918.1,399.5 924.3,406.0 191.4,459.7" fill="#444444"/>
<polygon points="259.5,443.7 861.3,400.0 860.6,408.7 261.1,452.5" fill="url(#g5)"/>
<polygon points="261.1,439.2 858.0,396.0 861.3,400.0 259.5,443.7" fill="#444444"/>
<polygon points="257.8,434.9 862.0,391.3 861.3,400.0 259.5,443.7" fill="url(#g6)"/>
<polygon points="259.5,430.5 858.6,387.4 862.0,391.3 257.8,434.9" fill="#444444"/>
<polygon points="744.7,391.0 862.2,382.6 861.5,391.4 744.4,399.8" fill="url(#g7)"/>
<polygon points="742.3,387.0 744.7,391.0 744.4,399.8 742.0,395.8" fill="url(#g8)"/>
<polygon points="742.3,387.0 858.8,378.7 862.2,382.6 744.7,391.0" fill="#444444"/>
<polygon points="625.1,399.6 744.2,391.1 743.9,399.8 625.3,408.4" fill="url(#g9)"/>
<polygon points="623.6,395.5 625.1,399.6 625.3,408.4 623.9,404.3" fill="url(#g10)"/>
<polygon points="623.6,395.5 741.8,387.1 744.2,391.1 625.1,399.6" fill="#444444"/>
<polygon points="256.2,426.0 380.3,417.1 381.5,426.0 257.8,434.9" fill="url(#g11)"/>
<polygon points="380.3,417.1 380.9,412.8 382.1,421.7 381.5,426.0" fill="url(#g12)"/>
<polygon points="257.8,421.6 380.9,412.8 380.3,417.1 256.2,426.0" fill="#444444"/>
<polygon points="503.8,408.3 624.6,399.6 624.8,408.4 504.5,417.1" fill="url(#g13)"/>
<polygon points="503.4,404.1 503.8,408.3 504.5,417.1 504.1,412.9" fill="url(#g14)"/>
<polygon points="503.4,404.1 623.1,395.5 624.6,399.6 503.8,408.3" fill="#444444"/>
<polygon points="380.8,417.1 503.3,408.3 504.0,417.2 382.0,425.9" fill="url(#g15)"/>
<polygon points="381.5,412.8 502.9,404.1 503.3,408.3 380.8,417.1" fill="#444444"/>
<polygon points="744.9,382.2 862.9,373.8 862.2,382.6 744.7,391.0" fill="url(#g16)"/>
<polygon points="742.5,378.2 744.9,382.2 744.7,391.0 742.3,387.0" fill="url(#g17)"/>
<polygon points="742.5,378.2 859.5,369.9 862.9,373.8 744.9,382.2" fill="#444444"/>
<text transform="matrix(0.6093 -0.0433 0.1573 0.2098 192.53 400.74)" x="980.0" y="89.0" font-size="13" fill="#ffffff" font-weight="bold" text-anchor="middle">不問の間</text>
<polygon points="624.8,390.7 744.4,382.2 744.2,391.1 625.1,399.6" fill="url(#g18)"/>
<polygon points="623.4,386.7 624.8,390.7 625.1,399.6 623.6,395.5" fill="url(#g19)"/>
<polygon points="623.4,386.7 742.0,378.3 744.4,382.2 624.8,390.7" fill="#444444"/>
<text transform="matrix(0.6177 -0.0439 0.1045 0.2150 189.82 400.79)" x="786.0" y="89.0" font-size="13" fill="#ffffff" font-weight="bold" text-anchor="middle">日記の間</text>
<polygon points="254.5,417.0 379.1,408.2 380.3,417.1 256.2,426.0" fill="url(#g20)"/>
<polygon points="379.1,408.2 379.8,403.9 380.9,412.8 380.3,417.1" fill="url(#g21)"/>
<polygon points="256.2,412.7 379.8,403.9 379.1,408.2 254.5,417.0" fill="#444444"/>
<text transform="matrix(0.6439 -0.0458 -0.0629 0.2316 191.80 400.24)" x="204.0" y="89.0" font-size="13" fill="#ffffff" font-weight="bold" text-anchor="middle">お茶の間</text>
<polygon points="503.1,399.3 624.3,390.7 624.6,399.6 503.8,408.3" fill="url(#g22)"/>
<polygon points="502.7,395.2 503.1,399.3 503.8,408.3 503.4,404.1" fill="url(#g23)"/>
<polygon points="502.7,395.2 622.9,386.7 624.3,390.7 503.1,399.3" fill="#444444"/>
<text transform="matrix(0.6262 -0.0445 0.0503 0.2204 188.75 400.73)" x="592.0" y="89.0" font-size="13" fill="#ffffff" font-weight="bold" text-anchor="middle">音楽の間</text>
<polygon points="379.7,408.1 502.6,399.4 503.3,408.3 380.8,417.1" fill="url(#g24)"/>
<polygon points="380.3,403.9 502.2,395.3 502.6,399.4 379.7,408.1" fill="#444444"/>
<text transform="matrix(0.6350 -0.0451 -0.0055 0.2259 189.38 400.55)" x="398.0" y="89.0" font-size="13" fill="#ffffff" font-weight="bold" text-anchor="middle">小説の間</text>
<polygon points="392.3,646.1 1008.7,593.9 1007.0,604.7 393.8,657.0" fill="url(#g25)"/>
<polygon points="408.3,453.6 867.3,419.8 1008.7,593.9 392.3,646.1" fill="#37241a"/>
<polygon points="410.2,454.2 866.0,420.6 1005.3,592.9 395.0,644.5" fill="#553a26"/>
<polygon points="412.1,454.8 864.7,421.4 1001.9,591.9 397.7,642.9" fill="#7a593c"/>
<polygon points="414.0,455.5 863.5,422.2 998.4,590.8 400.4,641.3" fill="#a47c5e"/>
<polygon points="414.0,455.5 863.5,422.2 998.4,590.8 400.4,641.3" fill="#6a4a30" filter="url(#corkf)" opacity="0.5"/>
<polygon points="414.0,455.5 863.5,422.2 998.4,590.8 400.4,641.3" fill="#f2e2d2" filter="url(#corkg)" opacity="0.4"/>
<polygon points="684.3,500.4 900.1,483.7 899.1,493.4 684.3,510.2" fill="url(#g26)"/>
<polygon points="658.2,433.8 684.3,500.4 684.3,510.2 658.3,442.7" fill="url(#g27)"/>
<polygon points="658.2,433.8 850.2,419.6 900.1,483.7 684.3,500.4" fill="#a47c5e"/>
<polygon points="658.2,433.8 850.2,419.6 900.1,483.7 684.3,500.4" fill="#6a4a30" filter="url(#corkf)" opacity="0.5"/>
<polygon points="658.2,433.8 850.2,419.6 900.1,483.7 684.3,500.4" fill="#f2e2d2" filter="url(#corkg)" opacity="0.4"/>
<line x1="658.2" y1="433.8" x2="684.3" y2="500.4" stroke="#5e4636" stroke-width="0.7" stroke-opacity="0.7"/>
<line x1="658.2" y1="433.8" x2="850.2" y2="419.6" stroke="#5e4636" stroke-width="0.7" stroke-opacity="0.5"/>
<line x1="850.2" y1="419.6" x2="900.1" y2="483.7" stroke="#5e4636" stroke-width="0.7" stroke-opacity="0.5"/>
<polygon points="669.0,436.8 683.0,490.3 885.1,480.0 852.4,426.2" fill="#fbfbfb"/>
<text transform="matrix(0.6932 -0.0532 0.1523 0.2907 116.67 418.19)" x="766.0" y="367.0" font-size="12" fill="#2b2b33">&gt;&gt;最近の更新</text>
<polygon points="430.6,520.8 650.9,503.7 651.0,513.4 431.7,530.6" fill="url(#g28)"/>
<polygon points="433.3,450.3 628.4,436.0 650.9,503.7 430.6,520.8" fill="#a47c5e"/>
<polygon points="433.3,450.3 628.4,436.0 650.9,503.7 430.6,520.8" fill="#6a4a30" filter="url(#corkf)" opacity="0.5"/>
<polygon points="433.3,450.3 628.4,436.0 650.9,503.7 430.6,520.8" fill="#f2e2d2" filter="url(#corkg)" opacity="0.4"/>
<line x1="433.3" y1="450.3" x2="430.6" y2="520.8" stroke="#5e4636" stroke-width="0.7" stroke-opacity="0.7"/>
<line x1="433.3" y1="450.3" x2="628.4" y2="436.0" stroke="#5e4636" stroke-width="0.7" stroke-opacity="0.5"/>
<line x1="628.4" y1="436.0" x2="650.9" y2="503.7" stroke="#5e4636" stroke-width="0.7" stroke-opacity="0.5"/>
<polygon points="434.8,454.1 432.8,510.6 642.3,499.2 626.7,442.2" fill="#fbfbfb"/>
<text transform="matrix(0.7138 -0.0548 0.0259 0.3052 149.64 413.91)" x="412.5" y="368.5" font-size="12" fill="#2b2b33">&gt;&gt;最近の更新</text>
<polygon points="717.5,590.4 966.1,569.7 964.7,580.5 717.3,601.1" fill="url(#g29)"/>
<polygon points="685.0,506.6 717.5,590.4 717.3,601.1 685.0,516.4" fill="url(#g30)"/>
<polygon points="685.0,506.6 903.8,489.5 966.1,569.7 717.5,590.4" fill="#a47c5e"/>
<polygon points="685.0,506.6 903.8,489.5 966.1,569.7 717.5,590.4" fill="#6a4a30" filter="url(#corkf)" opacity="0.5"/>
<polygon points="685.0,506.6 903.8,489.5 966.1,569.7 717.5,590.4" fill="#f2e2d2" filter="url(#corkg)" opacity="0.4"/>
<line x1="685.0" y1="506.6" x2="717.5" y2="590.4" stroke="#5e4636" stroke-width="0.7" stroke-opacity="0.7"/>
<line x1="685.0" y1="506.6" x2="903.8" y2="489.5" stroke="#5e4636" stroke-width="0.7" stroke-opacity="0.5"/>
<line x1="903.8" y1="489.5" x2="966.1" y2="569.7" stroke="#5e4636" stroke-width="0.7" stroke-opacity="0.5"/>
<polygon points="696.3,507.7 718.8,578.4 948.9,560.7 905.5,494.9" fill="#fbfbfb"/>
<text transform="matrix(0.7947 -0.0651 0.2021 0.3840 6.65 381.13)" x="768.0" y="622.0" font-size="12" fill="#2b2b33">&gt;&gt;最近の更新</text>
<polygon points="426.3,614.8 679.4,593.8 679.4,604.6 427.6,625.6" fill="url(#g31)"/>
<polygon points="429.7,526.5 651.5,509.2 679.4,593.8 426.3,614.8" fill="#a47c5e"/>
<polygon points="429.7,526.5 651.5,509.2 679.4,593.8 426.3,614.8" fill="#6a4a30" filter="url(#corkf)" opacity="0.5"/>
<polygon points="429.7,526.5 651.5,509.2 679.4,593.8 426.3,614.8" fill="#f2e2d2" filter="url(#corkg)" opacity="0.4"/>
<line x1="429.7" y1="526.5" x2="426.3" y2="614.8" stroke="#5e4636" stroke-width="0.7" stroke-opacity="0.7"/>
<line x1="429.7" y1="526.5" x2="651.5" y2="509.2" stroke="#5e4636" stroke-width="0.7" stroke-opacity="0.5"/>
<line x1="651.5" y1="509.2" x2="679.4" y2="593.8" stroke="#5e4636" stroke-width="0.7" stroke-opacity="0.5"/>
<polygon points="438.3,528.0 430.6,601.7 665.6,587.7 649.1,515.3" fill="#fbfbfb"/>
<text transform="matrix(0.8192 -0.0670 0.0344 0.4024 94.44 370.98)" x="413.0" y="618.0" font-size="12" fill="#2b2b33">&gt;&gt;最近の更新</text>
<polygon points="702.4,467.7 872.3,454.8 871.5,464.4 702.3,477.3" fill="url(#g32)"/>
<polygon points="688.0,435.5 702.4,467.7 702.3,477.3 687.9,444.6" fill="url(#g33)"/>
<polygon points="688.0,435.5 848.3,423.6 872.3,454.8 702.4,467.7" fill="#fafafa"/>
<polygon points="450.3,487.7 625.5,474.4 625.7,484.1 451.3,497.4" fill="url(#g34)"/>
<polygon points="450.5,454.1 615.5,441.9 625.5,474.4 450.3,487.7" fill="#fafafa"/>
<polygon points="739.7,551.3 934.4,535.6 933.2,546.1 739.4,561.9" fill="url(#g35)"/>
<polygon points="721.5,510.7 739.7,551.3 739.4,561.9 721.3,520.8" fill="url(#g36)"/>
<polygon points="721.5,510.7 904.2,496.4 934.4,535.6 739.7,551.3" fill="#fafafa"/>
<polygon points="449.8,575.5 651.3,559.2 651.4,569.9 451.0,586.2" fill="url(#g37)"/>
<polygon points="450.1,532.0 638.5,517.2 651.3,559.2 449.8,575.5" fill="#fafafa"/>
<polygon points="688.5,431.9 694.5,431.5 694.4,440.8 688.5,441.2" fill="url(#g38)"/>
<polygon points="686.3,426.9 688.5,431.9 688.5,441.2 686.2,436.1" fill="url(#g39)"/>
<polygon points="686.3,426.9 692.2,426.5 694.5,431.5 688.5,431.9" fill="#fcfcfc"/>
<polygon points="722.7,507.9 729.5,507.3 729.3,517.6 722.5,518.2" fill="url(#g40)"/>
<polygon points="719.8,501.3 722.7,507.9 722.5,518.2 719.6,511.5" fill="url(#g41)"/>
<polygon points="719.8,501.3 726.5,500.8 729.5,507.3 722.7,507.9" fill="#fcfcfc"/>
<polygon points="449.4,471.5 623.3,458.4 623.5,468.0 450.4,481.1" fill="url(#g42)"/>
<polygon points="449.6,444.8 615.3,432.6 623.3,458.4 449.4,471.5" fill="#fcfcfc"/>
<text transform="matrix(0.6761 -0.0499 0.0310 0.2625 165.22 405.63)" x="418.5" y="247.5" font-size="11.8" fill="#101018" font-weight="500">なるべく更新していけたら嬉しいです</text>
<text transform="matrix(0.6819 -0.0505 0.0316 0.2670 162.17 404.79)" x="418.5" y="264.7" font-size="11.8" fill="#101018" font-weight="500">気づくと数ヶ月放置とかよくあります</text>
<text transform="matrix(0.6874 -0.0511 0.0339 0.2714 158.69 403.88)" x="418.5" y="281.9" font-size="11.8" fill="#101018" font-weight="500">短いものが多いので、さくっと読めます</text>
<text transform="matrix(0.6942 -0.0518 0.0290 0.2767 156.69 402.69)" x="418.5" y="299.1" font-size="11.8" fill="#101018" font-weight="500">短いながらも毎日つづけばいいな</text>
<line x1="449.4" y1="465.2" x2="621.4" y2="452.4" stroke="#c9c9c9" stroke-width="0.8"/>
<polygon points="700.1,452.8 869.1,440.1 868.3,449.7 700.0,462.4" fill="url(#g43)"/>
<polygon points="688.0,426.3 700.1,452.8 700.0,462.4 688.0,435.5" fill="url(#g44)"/>
<polygon points="688.0,426.3 849.0,414.4 869.1,440.1 700.1,452.8" fill="#fcfcfc"/>
<text transform="matrix(0.6566 -0.0484 0.1460 0.2494 150.40 407.83)" x="777.5" y="243.5" font-size="11.8" fill="#101018" font-weight="500">その昔にぜひしようと取材されてきた</text>
<text transform="matrix(0.6618 -0.0489 0.1501 0.2534 144.88 407.29)" x="777.5" y="260.7" font-size="11.8" fill="#101018" font-weight="500">いつまで続くとも技術が向上しないので</text>
<text transform="matrix(0.6670 -0.0495 0.1544 0.2575 139.17 406.67)" x="777.5" y="277.9" font-size="11.8" fill="#101018" font-weight="500">手短にいうと、ただ、どっと、いうはなし</text>
<text transform="matrix(0.6729 -0.0501 0.1553 0.2621 133.78 405.90)" x="777.5" y="295.1" font-size="11.8" fill="#101018" font-weight="500">3種類に分類して日々の創作などを紹介</text>
<line x1="697.4" y1="446.9" x2="864.6" y2="434.4" stroke="#c9c9c9" stroke-width="0.8"/>
<polygon points="702.2,457.5 754.5,453.6 754.1,463.2 702.1,467.2" fill="url(#g45)"/>
<polygon points="700.1,452.8 702.2,457.5 702.1,467.2 700.0,462.4" fill="url(#g46)"/>
<polygon points="700.1,452.8 751.9,448.9 754.5,453.6 702.2,457.5" fill="#f4f4f4"/>
<polygon points="700.1,452.8 751.9,448.9 754.5,453.6 702.2,457.5" fill="#f4f4f4" stroke="#777" stroke-width="0.6"/>
<text transform="matrix(0.6890 -0.0518 0.1510 0.2748 121.34 403.30)" x="770.5" y="338.0" font-size="12" fill="#2b2b33">&gt;&gt;最近の更新</text>
<polygon points="449.3,477.4 503.2,473.4 504.0,483.1 450.3,487.1" fill="url(#g47)"/>
<polygon points="449.4,471.5 502.7,467.5 503.2,473.4 449.3,477.4" fill="#f4f4f4"/>
<polygon points="449.4,471.5 502.7,467.5 503.2,473.4 449.3,477.4" fill="#f4f4f4" stroke="#777" stroke-width="0.6"/>
<text transform="matrix(0.7101 -0.0534 0.0242 0.2894 150.43 399.43)" x="411.5" y="341.0" font-size="12" fill="#2b2b33">&gt;&gt;最近の更新</text>
<polygon points="448.7,557.9 649.1,541.9 649.3,552.6 449.9,568.6" fill="url(#g48)"/>
<polygon points="449.0,521.7 638.3,507.0 649.1,541.9 448.7,557.9" fill="#fcfcfc"/>
<text transform="matrix(0.7734 -0.0605 0.0430 0.3438 110.87 379.70)" x="418.5" y="505.5" font-size="11.8" fill="#101018" font-weight="500">それ以上でもそれ以下でもなく日記です</text>
<text transform="matrix(0.7809 -0.0613 0.0438 0.3506 106.58 376.67)" x="418.5" y="522.7" font-size="11.8" fill="#101018" font-weight="500">技術的な話とかも日々ごとにありますが</text>
<text transform="matrix(0.7885 -0.0622 0.0447 0.3575 102.18 373.43)" x="418.5" y="539.9" font-size="11.8" fill="#101018" font-weight="500">主にどうでもいいことを書き綴ってます</text>
<text transform="matrix(0.7964 -0.0631 0.0456 0.3647 97.67 369.97)" x="418.5" y="557.1" font-size="11.8" fill="#101018" font-weight="500">日記だけに更新は不定期（気まぐれ？）</text>
<line x1="448.8" y1="549.6" x2="646.6" y2="533.9" stroke="#c9c9c9" stroke-width="0.8"/>
<polygon points="737.8,535.9 932.0,520.3 930.8,530.9 737.5,546.5" fill="url(#g49)"/>
<polygon points="721.7,500.5 737.8,535.9 737.5,546.5 721.5,510.7" fill="url(#g50)"/>
<polygon points="721.7,500.5 905.3,486.2 932.0,520.3 737.8,535.9" fill="#fcfcfc"/>
<text transform="matrix(0.7499 -0.0586 0.1913 0.3269 52.07 386.98)" x="777.5" y="505.5" font-size="11.8" fill="#101018" font-weight="500">開けるも意のない間だというやつです</text>
<text transform="matrix(0.7570 -0.0595 0.1950 0.3332 44.05 384.44)" x="777.5" y="522.7" font-size="11.8" fill="#101018" font-weight="500">開けたところで何があるわけでもない</text>
<text transform="matrix(0.7645 -0.0603 0.1966 0.3400 36.69 381.59)" x="777.5" y="539.9" font-size="11.8" fill="#101018" font-weight="500">得るものはないけど失うものはある</text>
<text transform="matrix(0.7715 -0.0611 0.2027 0.3464 27.28 378.78)" x="777.5" y="557.1" font-size="11.8" fill="#101018" font-weight="500">例えば貴方の貴重な時間だとか……等</text>
<line x1="734.2" y1="527.9" x2="926.1" y2="512.7" stroke="#c9c9c9" stroke-width="0.8"/>
<polygon points="739.6,539.9 799.6,535.1 799.0,545.8 739.3,550.6" fill="url(#g51)"/>
<polygon points="737.8,535.9 739.6,539.9 739.3,550.6 737.5,546.5" fill="url(#g52)"/>
<polygon points="737.8,535.9 797.4,531.1 799.6,535.1 739.6,539.9" fill="#f4f4f4"/>
<polygon points="737.8,535.9 797.4,531.1 799.6,535.1 739.6,539.9" fill="#f4f4f4" stroke="#777" stroke-width="0.6"/>
<text transform="matrix(0.7901 -0.0633 0.1996 0.3633 13.20 370.85)" x="770.5" y="595.0" font-size="12" fill="#2b2b33">&gt;&gt;最近の更新</text>
<polygon points="448.6,564.0 510.7,559.0 511.6,569.8 449.8,574.7" fill="url(#g53)"/>
<polygon points="448.7,557.9 510.2,553.0 510.7,559.0 448.6,564.0" fill="#f4f4f4"/>
<polygon points="448.7,557.9 510.2,553.0 510.7,559.0 448.6,564.0" fill="#f4f4f4" stroke="#777" stroke-width="0.6"/>
<text transform="matrix(0.8175 -0.0655 0.0321 0.3839 94.89 360.02)" x="411.5" y="597.0" font-size="12" fill="#2b2b33">&gt;&gt;最近の更新</text>
<polygon points="177.1,610.0 352.5,595.7 354.1,606.1 179.6,620.4" fill="url(#g54)"/>
<polygon points="352.5,595.7 379.1,415.8 380.2,424.1 354.1,606.1" fill="url(#g55)"/>
<polygon points="250.2,425.0 379.1,415.8 352.5,595.7 177.1,610.0" fill="#444444"/>
<polygon points="346.8,596.2 352.5,595.7 352.9,592.9" fill="#e8e8e8"/>
<polygon points="178.0,589.9 351.5,575.9 353.1,586.3 180.5,600.3" fill="url(#g56)"/>
<polygon points="351.5,575.9 377.3,407.5 378.5,415.9 353.1,586.3" fill="url(#g57)"/>
<polygon points="248.3,416.6 377.3,407.5 351.5,575.9 178.0,589.9" fill="#444444"/>
<polygon points="175.2,578.3 349.6,564.4 351.2,574.8 177.7,588.8" fill="url(#g58)"/>
<polygon points="349.6,564.4 375.9,399.1 377.0,407.5 351.2,574.8" fill="url(#g59)"/>
<polygon points="246.1,408.2 375.9,399.1 349.6,564.4 175.2,578.3" fill="#444444"/>
<polygon points="229.0,434.4 368.9,424.3 370.1,433.3 230.8,443.4" fill="url(#g60)"/>
<polygon points="368.9,424.3 374.5,390.6 375.6,399.1 370.1,433.3" fill="url(#g61)"/>
<polygon points="243.9,399.7 374.5,390.6 368.9,424.3 229.0,434.4" fill="#444444"/>
<polygon points="211.2,475.8 362.3,464.6 363.6,474.1 213.2,485.4" fill="url(#g62)"/>
<polygon points="362.3,464.6 368.3,428.0 369.6,437.0 363.6,474.1" fill="url(#g63)"/>
<polygon points="227.4,438.1 368.3,428.0 362.3,464.6 211.2,475.8" fill="#444444"/>
<polygon points="180.8,546.7 350.9,533.5 352.5,543.8 183.2,557.1" fill="url(#g64)"/>
<polygon points="350.9,533.5 361.8,467.7 363.1,477.2 352.5,543.8" fill="url(#g65)"/>
<polygon points="209.9,479.0 361.8,467.7 350.9,533.5 180.8,546.7" fill="#444444"/>
<polygon points="172.2,566.9 347.7,553.1 349.3,563.6 174.7,577.5" fill="url(#g66)"/>
<polygon points="347.7,553.1 349.7,540.9 351.3,551.4 349.3,563.6" fill="url(#g67)"/>
<polygon points="177.5,554.4 349.7,540.9 347.7,553.1 172.2,566.9" fill="#444444"/>
<polygon points="226.2,424.0 366.6,414.0 367.9,423.0 228.0,433.1" fill="url(#g68)"/>
<polygon points="366.6,414.0 371.5,385.6 372.7,394.2 367.9,423.0" fill="url(#g69)"/>
<polygon points="239.1,394.9 371.5,385.6 366.6,414.0 226.2,424.0" fill="#444444"/>
<polygon points="208.0,464.9 359.7,453.8 361.1,463.3 210.1,474.5" fill="url(#g70)"/>
<polygon points="359.7,453.8 364.3,427.5 365.6,436.7 361.1,463.3" fill="url(#g71)"/>
<polygon points="220.0,437.9 364.3,427.5 359.7,453.8 208.0,464.9" fill="#444444"/>
<polygon points="177.0,535.0 348.0,521.8 349.6,532.2 179.4,545.4" fill="url(#g72)"/>
<polygon points="348.0,521.8 357.3,468.1 358.7,477.8 349.6,532.2" fill="url(#g73)"/>
<polygon points="201.5,479.7 357.3,468.1 348.0,521.8 177.0,535.0" fill="#444444"/>
<polygon points="206.6,549.9 344.7,539.0 346.3,549.7 209.0,560.5" fill="url(#g74)"/>
<polygon points="344.7,539.0 346.0,531.1 347.7,541.6 346.3,549.7" fill="url(#g75)"/>
<polygon points="209.8,541.7 346.0,531.1 344.7,539.0 206.6,549.9" fill="#444444"/>
<text transform="matrix(0.8174 -0.0639 -0.1315 0.3708 185.99 356.23)" x="114.5" y="534.5" font-size="13" fill="#ffffff" font-weight="bold">不問の間</text>
<polygon points="224.3,414.9 365.3,404.9 366.6,414.0 226.2,424.0" fill="url(#g76)"/>
<polygon points="365.3,404.9 370.3,376.9 371.5,385.6 366.6,414.0" fill="url(#g77)"/>
<polygon points="237.4,386.2 370.3,376.9 365.3,404.9 224.3,414.9" fill="#444444"/>
<line x1="237.8" y1="393.2" x2="365.3" y2="384.4" stroke="#6b7ea8" stroke-width="0.6" stroke-dasharray="1.5 1.5"/>
<line x1="234.7" y1="400.3" x2="364.0" y2="391.2" stroke="#6b7ea8" stroke-width="0.6" stroke-dasharray="1.5 1.5"/>
<line x1="231.5" y1="407.5" x2="362.7" y2="398.3" stroke="#6b7ea8" stroke-width="0.6" stroke-dasharray="1.5 1.5"/>
<polygon points="206.0,455.3 358.3,444.1 359.7,453.8 208.0,464.9" fill="url(#g78)"/>
<polygon points="358.3,444.1 363.0,418.2 364.3,427.5 359.7,453.8" fill="url(#g79)"/>
<polygon points="218.1,428.6 363.0,418.2 358.3,444.1 206.0,455.3" fill="#444444"/>
<line x1="218.5" y1="436.6" x2="357.5" y2="426.5" stroke="#6b7ea8" stroke-width="0.6" stroke-dasharray="1.5 1.5"/>
<line x1="214.7" y1="444.9" x2="355.9" y2="434.7" stroke="#6b7ea8" stroke-width="0.6" stroke-dasharray="1.5 1.5"/>
<polygon points="174.5,524.4 346.3,511.2 348.0,521.8 177.0,535.0" fill="url(#g80)"/>
<polygon points="346.3,511.2 355.8,458.3 357.3,468.1 348.0,521.8" fill="url(#g81)"/>
<polygon points="199.4,469.8 355.8,458.3 346.3,511.2 174.5,524.4" fill="#444444"/>
<line x1="199.7" y1="478.5" x2="349.8" y2="467.4" stroke="#6b7ea8" stroke-width="0.6" stroke-dasharray="1.5 1.5"/>
<line x1="195.4" y1="488.3" x2="348.1" y2="476.9" stroke="#6b7ea8" stroke-width="0.6" stroke-dasharray="1.5 1.5"/>
<line x1="190.8" y1="498.4" x2="346.2" y2="486.7" stroke="#6b7ea8" stroke-width="0.6" stroke-dasharray="1.5 1.5"/>
<line x1="186.2" y1="508.9" x2="344.3" y2="496.9" stroke="#6b7ea8" stroke-width="0.6" stroke-dasharray="1.5 1.5"/>
<polygon points="268.4,381.4 357.4,375.2 358.6,384.1 270.0,390.2" fill="url(#g82)"/>
<polygon points="357.4,375.2 358.4,370.2 359.6,378.9 358.6,384.1" fill="url(#g83)"/>
<polygon points="270.5,376.2 358.4,370.2 357.4,375.2 268.4,381.4" fill="#444444"/>
<text transform="matrix(0.6270 -0.0433 -0.0660 0.2100 192.37 383.01)" x="125.5" y="10.6" font-size="13" fill="#ffffff" font-weight="bold">ぼかろいど （95）</text>
<polygon points="265.7,388.2 356.0,382.0 357.2,390.9 267.4,397.2" fill="url(#g84)"/>
<polygon points="356.0,382.0 357.1,376.8 358.3,385.6 357.2,390.9" fill="url(#g85)"/>
<polygon points="267.8,382.9 357.1,376.8 356.0,382.0 265.7,388.2" fill="#444444"/>
<text transform="matrix(0.6362 -0.0442 -0.0679 0.2161 190.74 383.00)" x="125.5" y="42.4" font-size="13" fill="#ffffff" font-weight="bold">ゆーつ   （17）</text>
<polygon points="263.0,395.3 354.5,388.9 355.8,398.0 264.6,404.4" fill="url(#g86)"/>
<polygon points="354.5,388.9 355.7,383.5 356.9,392.5 355.8,398.0" fill="url(#g87)"/>
<polygon points="265.1,389.8 355.7,383.5 354.5,388.9 263.0,395.3" fill="#444444"/>
<text transform="matrix(0.6459 -0.0451 -0.0717 0.2227 189.20 382.78)" x="125.5" y="74.2" font-size="13" fill="#ffffff" font-weight="bold">おりじなる （6）</text>
<polygon points="260.1,402.6 353.1,396.1 354.4,405.2 261.8,411.8" fill="url(#g88)"/>
<polygon points="353.1,396.1 354.2,390.5 355.5,399.6 354.4,405.2" fill="url(#g89)"/>
<polygon points="262.3,397.0 354.2,390.5 353.1,396.1 260.1,402.6" fill="#444444"/>
<text transform="matrix(0.6553 -0.0460 -0.0720 0.2292 187.52 382.36)" x="125.5" y="106.0" font-size="13" fill="#ffffff" font-weight="bold">よんこま （201）</text>
<polygon points="251.8,423.6 348.8,416.7 350.2,426.2 253.6,433.1" fill="url(#g90)"/>
<polygon points="348.8,416.7 350.0,410.7 351.4,420.1 350.2,426.2" fill="url(#g91)"/>
<polygon points="254.2,417.5 350.0,410.7 348.8,416.7 251.8,423.6" fill="#444444"/>
<text transform="matrix(0.6825 -0.0487 -0.0723 0.2485 182.32 379.97)" x="125.5" y="192.8" font-size="13" fill="#ffffff" font-weight="bold">あっぷる でんぱ （11）</text>
<polygon points="248.6,431.8 347.1,424.7 348.5,434.3 250.4,441.4" fill="url(#g92)"/>
<polygon points="347.1,424.7 348.4,418.5 349.8,428.0 348.5,434.3" fill="url(#g93)"/>
<polygon points="251.1,425.5 348.4,418.5 347.1,424.7 248.6,431.8" fill="#444444"/>
<text transform="matrix(0.6940 -0.0498 -0.0787 0.2569 181.40 378.45)" x="125.5" y="224.6" font-size="13" fill="#ffffff" font-weight="bold">すごー でんぱ （7）</text>
<polygon points="245.3,440.2 345.4,433.0 346.8,442.7 247.2,450.0" fill="url(#g94)"/>
<polygon points="345.4,433.0 346.7,426.6 348.2,436.2 346.8,442.7" fill="url(#g95)"/>
<polygon points="247.8,433.7 346.7,426.6 345.4,433.0 245.3,440.2" fill="#444444"/>
<text transform="matrix(0.7066 -0.0511 -0.0897 0.2660 181.81 376.46)" x="125.5" y="256.4" font-size="13" fill="#ffffff" font-weight="bold">そのた （1）</text>
<polygon points="235.7,464.6 340.5,456.9 342.0,466.9 237.7,474.6" fill="url(#g96)"/>
<polygon points="340.5,456.9 341.9,449.9 343.4,459.8 342.0,466.9" fill="url(#g97)"/>
<polygon points="238.5,457.5 341.9,449.9 340.5,456.9 235.7,464.6" fill="#444444"/>
<text transform="matrix(0.7389 -0.0544 -0.0958 0.2907 178.17 369.60)" x="125.5" y="342.8" font-size="13" fill="#ffffff" font-weight="bold">作品制作 （0）</text>
<polygon points="232.0,474.1 338.5,466.2 340.1,476.4 234.0,484.3" fill="url(#g98)"/>
<polygon points="338.5,466.2 340.0,459.0 341.6,469.0 340.1,476.4" fill="url(#g99)"/>
<polygon points="234.9,466.8 340.0,459.0 338.5,466.2 232.0,474.1" fill="#444444"/>
<text transform="matrix(0.7513 -0.0557 -0.0967 0.3004 176.33 366.32)" x="125.5" y="374.6" font-size="13" fill="#ffffff" font-weight="bold">開発技術 （72）</text>
<polygon points="228.1,484.0 336.5,475.9 338.1,486.2 230.2,494.3" fill="url(#g100)"/>
<polygon points="336.5,475.9 338.1,468.4 339.6,478.6 338.1,486.2" fill="url(#g101)"/>
<polygon points="231.1,476.4 338.1,468.4 336.5,475.9 228.1,484.0" fill="#444444"/>
<text transform="matrix(0.7641 -0.0570 -0.0976 0.3107 174.36 362.54)" x="125.5" y="406.4" font-size="13" fill="#ffffff" font-weight="bold">創作手順 （121）</text>
<polygon points="224.1,494.2 334.4,485.9 336.1,496.3 226.2,504.7" fill="url(#g102)"/>
<polygon points="334.4,485.9 336.0,478.2 337.7,488.5 336.1,496.3" fill="url(#g103)"/>
<polygon points="227.2,486.3 336.0,478.2 334.4,485.9 224.1,494.2" fill="#444444"/>
<text transform="matrix(0.7781 -0.0585 -0.1037 0.3221 174.37 358.00)" x="125.5" y="438.2" font-size="13" fill="#ffffff" font-weight="bold">備忘講座 （34）</text>
<polygon points="219.9,504.8 332.3,496.3 334.0,506.8 222.1,515.4" fill="url(#g104)"/>
<polygon points="332.3,496.3 334.0,488.3 335.6,498.7 334.0,506.8" fill="url(#g105)"/>
<polygon points="223.1,496.6 334.0,488.3 332.3,496.3 219.9,504.8" fill="#444444"/>
<text transform="matrix(0.7927 -0.0600 -0.1101 0.3341 174.74 352.82)" x="125.5" y="470.0" font-size="13" fill="#ffffff" font-weight="bold">紹介推奨 （1）</text>
<polygon points="4.9,872.3 1240.2,754.7 1236.7,766.8 9.4,884.5" fill="url(#g106)"/>
<polygon points="93.4,682.7 1093.8,597.5 1240.2,754.7 4.9,872.3" fill="#f0f0f0"/>
<polygon points="79.9,711.6 1116.3,621.7 1240.2,754.7 4.9,872.3" fill="#444444"/>
<line x1="93.4" y1="682.7" x2="393.2" y2="657.2" stroke="#b8b8b8" stroke-width="0.9"/>
<line x1="1007.7" y1="604.8" x2="1093.8" y2="597.5" stroke="#b8b8b8" stroke-width="0.9"/>
<line x1="75.5" y1="721.0" x2="1123.7" y2="629.6" stroke="#303030" stroke-width="0.9"/>
<line x1="65.4" y1="742.5" x2="1140.4" y2="647.5" stroke="#303030" stroke-width="0.9"/>
<line x1="59.8" y1="754.5" x2="1149.7" y2="657.5" stroke="#303030" stroke-width="0.9"/>
<line x1="54.5" y1="766.0" x2="1158.6" y2="667.1" stroke="#303030" stroke-width="0.9"/>
<line x1="48.7" y1="778.4" x2="1168.2" y2="677.3" stroke="#303030" stroke-width="0.9"/>
<line x1="43.2" y1="790.2" x2="1177.3" y2="687.1" stroke="#303030" stroke-width="0.9"/>
<line x1="37.2" y1="803.0" x2="1187.1" y2="697.7" stroke="#303030" stroke-width="0.9"/>
<line x1="31.0" y1="816.3" x2="1197.4" y2="708.7" stroke="#303030" stroke-width="0.9"/>
<line x1="24.8" y1="829.7" x2="1207.6" y2="719.7" stroke="#303030" stroke-width="0.9"/>
<line x1="18.1" y1="843.9" x2="1218.5" y2="731.4" stroke="#2c2c2c" stroke-width="1.3"/>
<line x1="12.0" y1="857.0" x2="1228.6" y2="742.2" stroke="#9a9a9a" stroke-width="0.7" stroke-dasharray="3.5 2.5"/>
<text transform="matrix(0.9053 -0.0794 0.0484 0.5126 44.23 320.38)" x="491.0" y="797.0" font-size="11" font-weight="normal" text-anchor="middle" fill="#ddd">|</text>
<text transform="matrix(0.8991 -0.0789 0.0878 0.5074 16.13 324.25)" x="557.8" y="797.0" font-size="11" font-weight="normal" text-anchor="middle" fill="#ddd">|</text>
<text transform="matrix(0.8930 -0.0783 0.1266 0.5022 -11.17 328.05)" x="624.6" y="797.0" font-size="11" font-weight="normal" text-anchor="middle" fill="#ddd">|</text>
<text transform="matrix(0.8869 -0.0778 0.1648 0.4971 -37.68 331.76)" x="691.4" y="797.0" font-size="11" font-weight="normal" text-anchor="middle" fill="#ddd">|</text>
<text transform="matrix(0.9066 -0.0800 0.1160 0.5171 -10.99 317.08)" x="601.3" y="816.5" font-size="11" font-weight="normal" text-anchor="middle" fill="#ddd">|</text>
<text transform="matrix(0.9311 -0.0833 0.1135 0.5454 -23.46 295.36)" x="587.5" y="854.6" font-size="11.75" font-weight="bold" text-anchor="middle" fill="#4f6cc8" stroke="#4f6cc8" stroke-width="1.6" opacity="0.55">暇で暇でしかたない、でもやることは何もない。</text>
<text transform="matrix(0.9311 -0.0833 0.1135 0.5454 -23.46 295.36)" x="587.5" y="854.6" font-size="11.75" font-weight="bold" text-anchor="middle" fill="#fff">暇で暇でしかたない、でもやることは何もない。</text>
<text transform="matrix(0.9435 -0.0850 0.1165 0.5601 -33.34 283.67)" x="587.5" y="874.0" font-size="11.75" font-weight="bold" text-anchor="middle" fill="#4f6cc8" stroke="#4f6cc8" stroke-width="1.6" opacity="0.55">どんなのでも良いから今の退屈を紛らわすモノが欲しい。</text>
<text transform="matrix(0.9435 -0.0850 0.1165 0.5601 -33.34 283.67)" x="587.5" y="874.0" font-size="11.75" font-weight="bold" text-anchor="middle" fill="#fff">どんなのでも良いから今の退屈を紛らわすモノが欲しい。</text>
<text transform="matrix(0.9561 -0.0867 0.1197 0.5754 -43.59 271.19)" x="587.5" y="893.4" font-size="11.75" font-weight="bold" text-anchor="middle" fill="#4f6cc8" stroke="#4f6cc8" stroke-width="1.6" opacity="0.55">そんなとき、このサイトの存在を思い出していただけたら幸いです。</text>
<text transform="matrix(0.9561 -0.0867 0.1197 0.5754 -43.59 271.19)" x="587.5" y="893.4" font-size="11.75" font-weight="bold" text-anchor="middle" fill="#fff">そんなとき、このサイトの存在を思い出していただけたら幸いです。</text>
<text transform="matrix(0.9691 -0.0886 0.1230 0.5913 -54.21 257.88)" x="587.5" y="912.8" font-size="11.75" font-weight="bold" text-anchor="middle" fill="#4f6cc8" stroke="#4f6cc8" stroke-width="1.6" opacity="0.55">もしかしたら退屈しのぎのお役に立てるかもしれないし、そうでないかもしれません。</text>
<text transform="matrix(0.9691 -0.0886 0.1230 0.5913 -54.21 257.88)" x="587.5" y="912.8" font-size="11.75" font-weight="bold" text-anchor="middle" fill="#fff">もしかしたら退屈しのぎのお役に立てるかもしれないし、そうでないかもしれません。</text>
<text transform="matrix(0.9825 -0.0904 0.1265 0.6079 -65.24 243.69)" x="587.5" y="932.2" font-size="11.75" font-weight="bold" text-anchor="middle" fill="#4f6cc8" stroke="#4f6cc8" stroke-width="1.6" opacity="0.55">つまらないサイトに来てしまったと後悔させてしまうかもしれません。</text>
<text transform="matrix(0.9825 -0.0904 0.1265 0.6079 -65.24 243.69)" x="587.5" y="932.2" font-size="11.75" font-weight="bold" text-anchor="middle" fill="#fff">つまらないサイトに来てしまったと後悔させてしまうかもしれません。</text>
<text transform="matrix(0.9962 -0.0924 0.1301 0.6252 -76.70 228.55)" x="587.5" y="951.6" font-size="11.75" font-weight="bold" text-anchor="middle" fill="#4f6cc8" stroke="#4f6cc8" stroke-width="1.6" opacity="0.55">ただ作品たちは、閲覧していただけたことを喜んでいます。</text>
<text transform="matrix(0.9962 -0.0924 0.1301 0.6252 -76.70 228.55)" x="587.5" y="951.6" font-size="11.75" font-weight="bold" text-anchor="middle" fill="#fff">ただ作品たちは、閲覧していただけたことを喜んでいます。</text>
<text transform="matrix(1.0095 -0.0944 0.1390 0.6424 -93.13 213.08)" x="594.5" y="971.0" font-size="11.75" font-weight="bold" text-anchor="end" fill="#4f6cc8" stroke="#4f6cc8" stroke-width="1.6" opacity="0.55">もちろん、それらの作品を</text>
<text transform="matrix(1.0095 -0.0944 0.1390 0.6424 -93.13 213.08)" x="594.5" y="971.0" font-size="11.75" font-weight="bold" text-anchor="end" fill="#fff">もちろん、それらの作品を</text>
<text transform="matrix(1.0001 -0.0935 0.1981 0.6339 -144.62 220.85)" x="675.5" y="971.0" font-size="11.75" font-weight="bold" text-anchor="start" fill="#4f6cc8" stroke="#4f6cc8" stroke-width="1.6" opacity="0.55">も、ね。</text>
<text transform="matrix(1.0001 -0.0935 0.1981 0.6339 -144.62 220.85)" x="675.5" y="971.0" font-size="11.75" font-weight="bold" text-anchor="start" fill="#fff">も、ね。</text>
<text transform="matrix(1.0457 -0.0993 0.1077 0.6875 -82.79 171.28)" x="544.0" y="1010.5" font-size="11" font-weight="bold" text-anchor="middle" fill="#fff">Copyright(C)</text>
<polygon points="714.9,663.3 759.2,659.4 758.8,670.7 714.7,674.5" fill="url(#g107)"/>
<polygon points="712.0,655.0 714.9,663.3 714.7,674.5 711.8,666.2" fill="url(#g108)"/>
<polygon points="712.0,655.0 755.8,651.2 759.2,659.4 714.9,663.3" fill="#444444"/>
<text transform="matrix(0.8883 -0.0773 0.1847 0.4894 -54.22 326.35)" x="724.7" y="796.0" font-size="12" font-weight="bold" text-anchor="middle" fill="#4f6cc8" stroke="#4f6cc8" stroke-width="1.6" opacity="0.55">不問の間</text>
<text transform="matrix(0.8883 -0.0773 0.1847 0.4894 -54.22 326.35)" x="724.7" y="796.0" font-size="12" font-weight="bold" text-anchor="middle" fill="#fff">不問の間</text>
<polygon points="655.1,668.5 699.7,664.6 699.6,675.9 655.2,679.7" fill="url(#g109)"/>
<polygon points="652.8,660.1 655.1,668.5 655.2,679.7 653.0,671.3" fill="url(#g110)"/>
<polygon points="652.8,660.1 697.0,656.3 699.7,664.6 655.1,668.5" fill="#444444"/>
<text transform="matrix(0.8944 -0.0778 0.1463 0.4944 -27.88 322.68)" x="657.9" y="796.0" font-size="12" font-weight="bold" text-anchor="middle" fill="#4f6cc8" stroke="#4f6cc8" stroke-width="1.6" opacity="0.55">日記の間</text>
<text transform="matrix(0.8944 -0.0778 0.1463 0.4944 -27.88 322.68)" x="657.9" y="796.0" font-size="12" font-weight="bold" text-anchor="middle" fill="#fff">日記の間</text>
<polygon points="594.8,673.7 639.8,669.8 640.0,681.1 595.3,685.0" fill="url(#g111)"/>
<polygon points="593.3,665.3 594.8,673.7 595.3,685.0 593.8,676.5" fill="url(#g112)"/>
<polygon points="593.3,665.3 637.7,661.4 639.8,669.8 594.8,673.7" fill="#444444"/>
<text transform="matrix(0.9005 -0.0784 0.1074 0.4996 -0.75 318.94)" x="591.1" y="796.0" font-size="12" font-weight="bold" text-anchor="middle" fill="#4f6cc8" stroke="#4f6cc8" stroke-width="1.6" opacity="0.55">音楽の間</text>
<text transform="matrix(0.9005 -0.0784 0.1074 0.4996 -0.75 318.94)" x="591.1" y="796.0" font-size="12" font-weight="bold" text-anchor="middle" fill="#fff">音楽の間</text>
<polygon points="534.2,679.0 579.5,675.1 580.0,686.3 535.0,690.3" fill="url(#g113)"/>
<polygon points="533.3,670.5 534.2,679.0 535.0,690.3 534.1,681.7" fill="url(#g114)"/>
<polygon points="533.3,670.5 578.1,666.6 579.5,675.1 534.2,679.0" fill="#444444"/>
<text transform="matrix(0.9067 -0.0789 0.0679 0.5048 27.19 315.11)" x="524.3" y="796.0" font-size="12" font-weight="bold" text-anchor="middle" fill="#4f6cc8" stroke="#4f6cc8" stroke-width="1.6" opacity="0.55">小説の間</text>
<text transform="matrix(0.9067 -0.0789 0.0679 0.5048 27.19 315.11)" x="524.3" y="796.0" font-size="12" font-weight="bold" text-anchor="middle" fill="#fff">小説の間</text>
<polygon points="473.2,684.3 518.7,680.4 519.6,691.6 474.3,695.6" fill="url(#g115)"/>
<polygon points="472.9,675.7 518.0,671.8 518.7,680.4 473.2,684.3" fill="#444444"/>
<text transform="matrix(0.9130 -0.0795 0.0279 0.5100 55.95 311.20)" x="457.5" y="796.0" font-size="12" font-weight="bold" text-anchor="middle" fill="#4f6cc8" stroke="#4f6cc8" stroke-width="1.6" opacity="0.55">お茶の間</text>
<text transform="matrix(0.9130 -0.0795 0.0279 0.5100 55.95 311.20)" x="457.5" y="796.0" font-size="12" font-weight="bold" text-anchor="middle" fill="#fff">お茶の間</text>
<polygon points="636.7,680.2 681.5,676.2 681.5,687.6 637.0,691.5" fill="url(#g116)"/>
<polygon points="634.7,671.5 636.7,680.2 637.0,691.5 634.9,682.8" fill="url(#g117)"/>
<polygon points="634.7,671.5 678.9,667.7 681.5,676.2 636.7,680.2" fill="#444444"/>
<text transform="matrix(0.9080 -0.0795 0.1363 0.5092 -28.58 311.92)" x="634.6" y="815.5" font-size="12" font-weight="bold" text-anchor="middle" fill="#4f6cc8" stroke="#4f6cc8" stroke-width="1.6" opacity="0.55">利用規約</text>
<text transform="matrix(0.9080 -0.0795 0.1363 0.5092 -28.58 311.92)" x="634.6" y="815.5" font-size="12" font-weight="bold" text-anchor="middle" fill="#fff">利用規約</text>
<polygon points="557.0,687.1 620.8,681.6 621.1,692.9 557.7,698.5" fill="url(#g118)"/>
<polygon points="555.9,678.4 557.0,687.1 557.7,698.5 556.6,689.7" fill="url(#g119)"/>
<polygon points="555.9,678.4 618.9,672.9 620.8,681.6 557.0,687.1" fill="#444444"/>
<text transform="matrix(0.9153 -0.0802 0.0901 0.5153 4.72 307.30)" x="557.8" y="815.5" font-size="12" font-weight="bold" text-anchor="middle" fill="#4f6cc8" stroke="#4f6cc8" stroke-width="1.6" opacity="0.55">よくある質問</text>
<text transform="matrix(0.9153 -0.0802 0.0901 0.5153 4.72 307.30)" x="557.8" y="815.5" font-size="12" font-weight="bold" text-anchor="middle" fill="#fff">よくある質問</text>
<polygon points="638.9,797.5 727.7,789.1 727.4,801.4 639.2,809.8" fill="url(#g120)"/>
<polygon points="636.4,785.4 638.9,797.5 639.2,809.8 636.7,797.6" fill="url(#g121)"/>
<polygon points="636.4,785.4 724.0,777.2 727.7,789.1 638.9,797.5" fill="#444444"/>
<polygon points="638.6,785.0 728.0,776.7 727.7,789.1 638.9,797.5" fill="url(#g122)"/>
<polygon points="636.1,773.1 638.6,785.0 638.9,797.5 636.4,785.4" fill="url(#g123)"/>
<polygon points="636.1,773.1 724.2,764.9 728.0,776.7 638.6,785.0" fill="#444444"/>
<text transform="matrix(1.0481 -0.0980 0.1759 0.6665 -153.58 166.93)" x="628.5" y="1009.5" font-size="11.75" font-weight="bold" text-anchor="middle" fill="#4f6cc8" stroke="#4f6cc8" stroke-width="1.6" opacity="0.55">あかつきのお宿</text>
<text transform="matrix(1.0481 -0.0980 0.1759 0.6665 -153.58 166.93)" x="628.5" y="1009.5" font-size="11.75" font-weight="bold" text-anchor="middle" fill="#fff">あかつきのお宿</text></svg>
</div>
<div id="dev">
 <svg style="position:absolute;left:7px;top:10px" width="12" height="12"><path d="M2.500 2.500l6.500 6.500M9 2.500l-6.500 6.500" stroke="#e8e8e8" stroke-width="2"/></svg>
 <div class="dbtn" style="left:27px;width:77px;color:#262c33;font-weight:bold;text-shadow:0 1px 0 rgba(255,255,255,.12);background:linear-gradient(#434c56,#3a434c);border-color:#23292f;">調査</div>
 <svg style="position:absolute;left:118px;top:11px" width="8" height="10"><path d="M6 1v8L1.500 5z" fill="#d8d8d8"/></svg>
 <svg style="position:absolute;left:130px;top:3px" width="786" height="26">
  <defs><linearGradient id="cb" x1="0" y1="0" x2="0" y2="1"><stop offset="0" stop-color="#414b55"/><stop offset="1" stop-color="#303a43"/></linearGradient>
  <linearGradient id="cs" x1="0" y1="0" x2="0" y2="1"><stop offset="0" stop-color="#1a2026"/><stop offset="1" stop-color="#262e36"/></linearGradient></defs>
  <rect x="1.500" y="1.500" width="783" height="23" rx="3" fill="url(#cb)" stroke="#1d2329" stroke-width="1"/>
  <path d="M4.500 1.500H68l12.500 11.500L68 24.500H4.500a3 3 0 0 1-3-3v-17a3 3 0 0 1 3-3z" fill="url(#cs)" stroke="#14191e" stroke-width="1"/>
  <g fill="none" stroke="#1c2228" stroke-width="1"><path d="M136 1.500l12 11.500-12 11.500"/><path d="M210 1.500l10 11.500-10 11.500"/><path d="M284 1.500l10 11.500-10 11.500"/><path d="M358 1.500l10 11.500-10 11.500"/><path d="M432 1.500l10 11.500-10 11.500"/><path d="M506 1.500l10 11.500-10 11.500"/><path d="M580 1.500l10 11.500-10 11.500"/><path d="M654 1.500l10 11.500-10 11.500"/><path d="M728 1.500l10 11.500-10 11.500"/></g>
  <g fill="none" stroke="#56616c" stroke-width="1" opacity=".55"><path d="M137 1.500l12 11.500-12 11.500"/><path d="M211 1.500l10 11.500-10 11.500"/><path d="M285 1.500l10 11.500-10 11.500"/><path d="M359 1.500l10 11.500-10 11.500"/><path d="M433 1.500l10 11.500-10 11.500"/><path d="M507 1.500l10 11.500-10 11.500"/><path d="M581 1.500l10 11.500-10 11.500"/><path d="M655 1.500l10 11.500-10 11.500"/><path d="M729 1.500l10 11.500-10 11.500"/></g>
 </svg>
 <div class="crumb" style="left:159px;color:#3f9bf2;">html</div>
 <div class="crumb" style="left:226px;">body</div>
 <div class="crumb" style="left:290px;width:50px;overflow:hidden;">div<i>#wrapper</i></div>
 <div class="crumb" style="left:364px;width:50px;overflow:hidden;">div<i>#header</i></div>
 <div class="crumb" style="left:438px;width:50px;overflow:hidden;">div<i>#top-content</i></div>
 <div class="crumb" style="left:512px;width:50px;overflow:hidden;">div<i>.wrap.lavalamp</i></div>
 <div class="crumb" style="left:586px;width:50px;overflow:hidden;">ul<i>.megamenu</i></div>
 <div class="crumb" style="left:660px;width:50px;overflow:hidden;">li<i>#top.on.first</i></div>
 <div class="crumb" style="left:734px;width:50px;overflow:hidden;">div<i>.menu</i></div>
 <div class="crumb" style="left:808px;width:50px;overflow:hidden;">div<i>.mm-content</i></div>
 <div class="crumb" style="left:895px;width:6px;overflow:hidden;">ul</div>
 <svg style="position:absolute;left:904px;top:11px" width="8" height="10"><path d="M2 1v8l4.500-4z" fill="#0d1013"/></svg>
 <div class="dbtn" style="left:923px;width:78px;color:#3f9bf2;background:linear-gradient(#1d242b,#2a323a);border-color:#14181d;">3D ビュー</div>
 <div class="dbtn" style="left:1005px;width:78px;">HTML</div>
 <div class="dbtn" style="left:1087px;width:76px;">スタイル</div>
</div>
<div id="status"><svg style="position:absolute;left:8px;top:3px" width="10" height="10"><path d="M2 2l5.500 5.500M7.500 2L2 7.500" stroke="#666" stroke-width="1.800"/></svg></div>
</body>
</html>
